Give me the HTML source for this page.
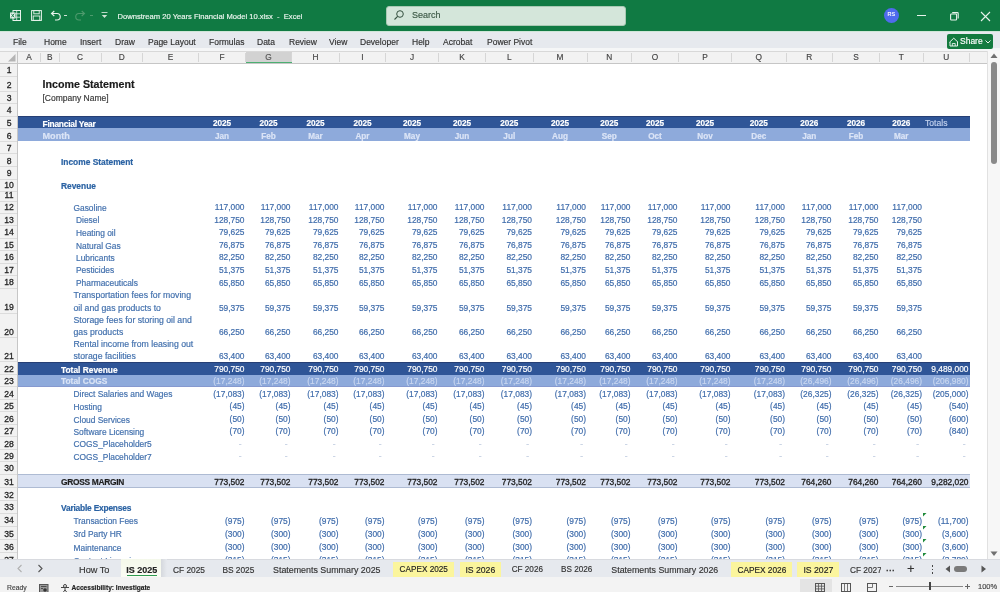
<!DOCTYPE html><html><head><meta charset="utf-8"><style>
*{margin:0;padding:0;box-sizing:border-box}
html,body{width:1000px;height:592px;overflow:hidden;background:#fff;font-family:"Liberation Sans", sans-serif}
.a{position:absolute;white-space:nowrap}
.t{position:absolute;white-space:nowrap;line-height:1;-webkit-text-stroke:0.15px}
</style></head><body><div style="position:absolute;left:0;top:0;width:1000px;height:592px;overflow:hidden;will-change:transform">

<div class="a" style="left:0;top:0;width:1000px;height:31px;background:#107a43"></div>
<div class="a" style="left:0;top:31px;width:1000px;height:1px;background:#cfe6d8"></div>
<div class="a" style="left:386px;top:5.5px;width:240px;height:20px;background:#d4e6da;border:1px solid #a9c9b4;border-radius:3px"></div>
<div class="t" style="left:412px;top:11px;font-size:9px;color:#3d5a47">Search</div>
<div class="t" style="left:117.5px;top:13px;font-size:7.6px;color:#eef7f1">Downstream 20 Years Financial Model 10.xlsx &nbsp;- &nbsp;Excel</div>
<div class="a" style="left:0;top:32px;width:1000px;height:16px;background:#e6e9ee"></div>
<div class="a" style="left:0;top:48px;width:1000px;height:3px;background:#f5f6f7"></div>
<div class="t" style="left:13px;top:37.5px;font-size:8.5px;color:#303030">File</div>
<div class="t" style="left:44px;top:37.5px;font-size:8.5px;color:#303030">Home</div>
<div class="t" style="left:80px;top:37.5px;font-size:8.5px;color:#303030">Insert</div>
<div class="t" style="left:115px;top:37.5px;font-size:8.5px;color:#303030">Draw</div>
<div class="t" style="left:148px;top:37.5px;font-size:8.5px;color:#303030">Page Layout</div>
<div class="t" style="left:209px;top:37.5px;font-size:8.5px;color:#303030">Formulas</div>
<div class="t" style="left:257px;top:37.5px;font-size:8.5px;color:#303030">Data</div>
<div class="t" style="left:289px;top:37.5px;font-size:8.5px;color:#303030">Review</div>
<div class="t" style="left:329px;top:37.5px;font-size:8.5px;color:#303030">View</div>
<div class="t" style="left:360px;top:37.5px;font-size:8.5px;color:#303030">Developer</div>
<div class="t" style="left:412px;top:37.5px;font-size:8.5px;color:#303030">Help</div>
<div class="t" style="left:443px;top:37.5px;font-size:8.5px;color:#303030">Acrobat</div>
<div class="t" style="left:487px;top:37.5px;font-size:8.5px;color:#303030">Power Pivot</div>
<div class="a" style="left:946.5px;top:33.5px;width:46px;height:15px;background:#137a3f;border-radius:2px"></div>
<div class="t" style="left:960px;top:37px;font-size:8.5px;color:#fff">Share</div>
<div class="a" style="left:0;top:51px;width:987px;height:12.5px;background:#f2f2f2;border-top:1px solid #d8d8d8"></div>
<div class="a" style="left:0;top:63px;width:987px;height:1px;background:#c6c6c6"></div>
<div class="a" style="left:40.0px;top:53px;width:1px;height:9px;background:#d6d6d6"></div>
<div class="t" style="left:17.5px;width:23.0px;text-align:center;top:53.4px;font-size:8.3px;color:#444">A</div>
<div class="a" style="left:58.5px;top:53px;width:1px;height:9px;background:#d6d6d6"></div>
<div class="t" style="left:40.5px;width:18.5px;text-align:center;top:53.4px;font-size:8.3px;color:#444">B</div>
<div class="a" style="left:100.5px;top:53px;width:1px;height:9px;background:#d6d6d6"></div>
<div class="t" style="left:59px;width:42px;text-align:center;top:53.4px;font-size:8.3px;color:#444">C</div>
<div class="a" style="left:142.0px;top:53px;width:1px;height:9px;background:#d6d6d6"></div>
<div class="t" style="left:101px;width:41.5px;text-align:center;top:53.4px;font-size:8.3px;color:#444">D</div>
<div class="a" style="left:198.0px;top:53px;width:1px;height:9px;background:#d6d6d6"></div>
<div class="t" style="left:142.5px;width:56.0px;text-align:center;top:53.4px;font-size:8.3px;color:#444">E</div>
<div class="a" style="left:245.0px;top:53px;width:1px;height:9px;background:#d6d6d6"></div>
<div class="t" style="left:198.5px;width:47.0px;text-align:center;top:53.4px;font-size:8.3px;color:#444">F</div>
<div class="a" style="left:245.5px;top:51.5px;width:46.0px;height:11.5px;background:#d2d2d2"></div>
<div class="a" style="left:245.5px;top:61.5px;width:46.0px;height:1.5px;background:#4caf72"></div>
<div class="a" style="left:291.0px;top:53px;width:1px;height:9px;background:#d6d6d6"></div>
<div class="t" style="left:245.5px;width:46.0px;text-align:center;top:53.4px;font-size:8.3px;color:#555">G</div>
<div class="a" style="left:339.0px;top:53px;width:1px;height:9px;background:#d6d6d6"></div>
<div class="t" style="left:291.5px;width:48.0px;text-align:center;top:53.4px;font-size:8.3px;color:#444">H</div>
<div class="a" style="left:385.0px;top:53px;width:1px;height:9px;background:#d6d6d6"></div>
<div class="t" style="left:339.5px;width:46.0px;text-align:center;top:53.4px;font-size:8.3px;color:#444">I</div>
<div class="a" style="left:438.0px;top:53px;width:1px;height:9px;background:#d6d6d6"></div>
<div class="t" style="left:385.5px;width:53.0px;text-align:center;top:53.4px;font-size:8.3px;color:#444">J</div>
<div class="a" style="left:485.0px;top:53px;width:1px;height:9px;background:#d6d6d6"></div>
<div class="t" style="left:438.5px;width:47.0px;text-align:center;top:53.4px;font-size:8.3px;color:#444">K</div>
<div class="a" style="left:532.5px;top:53px;width:1px;height:9px;background:#d6d6d6"></div>
<div class="t" style="left:485.5px;width:47.5px;text-align:center;top:53.4px;font-size:8.3px;color:#444">L</div>
<div class="a" style="left:586.5px;top:53px;width:1px;height:9px;background:#d6d6d6"></div>
<div class="t" style="left:533px;width:54px;text-align:center;top:53.4px;font-size:8.3px;color:#444">M</div>
<div class="a" style="left:631.0px;top:53px;width:1px;height:9px;background:#d6d6d6"></div>
<div class="t" style="left:587px;width:44.5px;text-align:center;top:53.4px;font-size:8.3px;color:#444">N</div>
<div class="a" style="left:678.0px;top:53px;width:1px;height:9px;background:#d6d6d6"></div>
<div class="t" style="left:631.5px;width:47.0px;text-align:center;top:53.4px;font-size:8.3px;color:#444">O</div>
<div class="a" style="left:731.0px;top:53px;width:1px;height:9px;background:#d6d6d6"></div>
<div class="t" style="left:678.5px;width:53.0px;text-align:center;top:53.4px;font-size:8.3px;color:#444">P</div>
<div class="a" style="left:785.5px;top:53px;width:1px;height:9px;background:#d6d6d6"></div>
<div class="t" style="left:731.5px;width:54.5px;text-align:center;top:53.4px;font-size:8.3px;color:#444">Q</div>
<div class="a" style="left:832.0px;top:53px;width:1px;height:9px;background:#d6d6d6"></div>
<div class="t" style="left:786px;width:46.5px;text-align:center;top:53.4px;font-size:8.3px;color:#444">R</div>
<div class="a" style="left:879.0px;top:53px;width:1px;height:9px;background:#d6d6d6"></div>
<div class="t" style="left:832.5px;width:47.0px;text-align:center;top:53.4px;font-size:8.3px;color:#444">S</div>
<div class="a" style="left:922.5px;top:53px;width:1px;height:9px;background:#d6d6d6"></div>
<div class="t" style="left:879.5px;width:43.5px;text-align:center;top:53.4px;font-size:8.3px;color:#444">T</div>
<div class="a" style="left:969.0px;top:53px;width:1px;height:9px;background:#d6d6d6"></div>
<div class="t" style="left:923px;width:46.5px;text-align:center;top:53.4px;font-size:8.3px;color:#444">U</div>
<div class="a" style="left:986.5px;top:53px;width:1px;height:9px;background:#d6d6d6"></div>
<svg class="a" style="left:8px;top:54px" width="8" height="8"><polygon points="7.5,0 7.5,7.5 0,7.5" fill="#b4b4b4"/></svg>
<div class="a" style="left:0;top:63.5px;width:17.5px;height:495.9px;background:#f2f2f2"></div>
<div class="a" style="left:17px;top:51px;width:1px;height:508.4px;background:#c6c6c6"></div>
<div class="a" style="left:0;top:75.5px;width:17px;height:1px;background:#dcdcdc"></div>
<div class="t" style="left:0.8px;width:16.5px;text-align:center;top:66.1px;font-size:8.6px;color:#262626;-webkit-text-stroke:0.3px #262626">1</div>
<div class="a" style="left:0;top:90.5px;width:17px;height:1px;background:#dcdcdc"></div>
<div class="t" style="left:0.8px;width:16.5px;text-align:center;top:81.1px;font-size:8.6px;color:#262626;-webkit-text-stroke:0.3px #262626">2</div>
<div class="a" style="left:0;top:103.25px;width:17px;height:1px;background:#dcdcdc"></div>
<div class="t" style="left:0.8px;width:16.5px;text-align:center;top:93.85px;font-size:8.6px;color:#262626;-webkit-text-stroke:0.3px #262626">3</div>
<div class="a" style="left:0;top:115.5px;width:17px;height:1px;background:#dcdcdc"></div>
<div class="t" style="left:0.8px;width:16.5px;text-align:center;top:106.1px;font-size:8.6px;color:#262626;-webkit-text-stroke:0.3px #262626">4</div>
<div class="a" style="left:0;top:127.9px;width:17px;height:1px;background:#dcdcdc"></div>
<div class="t" style="left:0.8px;width:16.5px;text-align:center;top:118.5px;font-size:8.6px;color:#262626;-webkit-text-stroke:0.3px #262626">5</div>
<div class="a" style="left:0;top:140.9px;width:17px;height:1px;background:#dcdcdc"></div>
<div class="t" style="left:0.8px;width:16.5px;text-align:center;top:131.5px;font-size:8.6px;color:#262626;-webkit-text-stroke:0.3px #262626">6</div>
<div class="a" style="left:0;top:153.25px;width:17px;height:1px;background:#dcdcdc"></div>
<div class="t" style="left:0.8px;width:16.5px;text-align:center;top:143.85px;font-size:8.6px;color:#262626;-webkit-text-stroke:0.3px #262626">7</div>
<div class="a" style="left:0;top:166.0px;width:17px;height:1px;background:#dcdcdc"></div>
<div class="t" style="left:0.8px;width:16.5px;text-align:center;top:156.6px;font-size:8.6px;color:#262626;-webkit-text-stroke:0.3px #262626">8</div>
<div class="a" style="left:0;top:178.5px;width:17px;height:1px;background:#dcdcdc"></div>
<div class="t" style="left:0.8px;width:16.5px;text-align:center;top:169.1px;font-size:8.6px;color:#262626;-webkit-text-stroke:0.3px #262626">9</div>
<div class="a" style="left:0;top:190.5px;width:17px;height:1px;background:#dcdcdc"></div>
<div class="t" style="left:0.8px;width:16.5px;text-align:center;top:181.1px;font-size:8.6px;color:#262626;-webkit-text-stroke:0.3px #262626">10</div>
<div class="a" style="left:0;top:200.5px;width:17px;height:1px;background:#dcdcdc"></div>
<div class="t" style="left:0.8px;width:16.5px;text-align:center;top:191.1px;font-size:8.6px;color:#262626;-webkit-text-stroke:0.3px #262626">11</div>
<div class="a" style="left:0;top:212.5px;width:17px;height:1px;background:#dcdcdc"></div>
<div class="t" style="left:0.8px;width:16.5px;text-align:center;top:203.1px;font-size:8.6px;color:#262626;-webkit-text-stroke:0.3px #262626">12</div>
<div class="a" style="left:0;top:225.0px;width:17px;height:1px;background:#dcdcdc"></div>
<div class="t" style="left:0.8px;width:16.5px;text-align:center;top:215.6px;font-size:8.6px;color:#262626;-webkit-text-stroke:0.3px #262626">13</div>
<div class="a" style="left:0;top:237.5px;width:17px;height:1px;background:#dcdcdc"></div>
<div class="t" style="left:0.8px;width:16.5px;text-align:center;top:228.1px;font-size:8.6px;color:#262626;-webkit-text-stroke:0.3px #262626">14</div>
<div class="a" style="left:0;top:250.2px;width:17px;height:1px;background:#dcdcdc"></div>
<div class="t" style="left:0.8px;width:16.5px;text-align:center;top:240.79999999999998px;font-size:8.6px;color:#262626;-webkit-text-stroke:0.3px #262626">15</div>
<div class="a" style="left:0;top:262.5px;width:17px;height:1px;background:#dcdcdc"></div>
<div class="t" style="left:0.8px;width:16.5px;text-align:center;top:253.1px;font-size:8.6px;color:#262626;-webkit-text-stroke:0.3px #262626">16</div>
<div class="a" style="left:0;top:275.0px;width:17px;height:1px;background:#dcdcdc"></div>
<div class="t" style="left:0.8px;width:16.5px;text-align:center;top:265.6px;font-size:8.6px;color:#262626;-webkit-text-stroke:0.3px #262626">17</div>
<div class="a" style="left:0;top:287.8px;width:17px;height:1px;background:#dcdcdc"></div>
<div class="t" style="left:0.8px;width:16.5px;text-align:center;top:278.40000000000003px;font-size:8.6px;color:#262626;-webkit-text-stroke:0.3px #262626">18</div>
<div class="a" style="left:0;top:312.8px;width:17px;height:1px;background:#dcdcdc"></div>
<div class="t" style="left:0.8px;width:16.5px;text-align:center;top:303.40000000000003px;font-size:8.6px;color:#262626;-webkit-text-stroke:0.3px #262626">19</div>
<div class="a" style="left:0;top:337.3px;width:17px;height:1px;background:#dcdcdc"></div>
<div class="t" style="left:0.8px;width:16.5px;text-align:center;top:327.90000000000003px;font-size:8.6px;color:#262626;-webkit-text-stroke:0.3px #262626">20</div>
<div class="a" style="left:0;top:361.3px;width:17px;height:1px;background:#dcdcdc"></div>
<div class="t" style="left:0.8px;width:16.5px;text-align:center;top:351.90000000000003px;font-size:8.6px;color:#262626;-webkit-text-stroke:0.3px #262626">21</div>
<div class="a" style="left:0;top:374.3px;width:17px;height:1px;background:#dcdcdc"></div>
<div class="t" style="left:0.8px;width:16.5px;text-align:center;top:364.90000000000003px;font-size:8.6px;color:#262626;-webkit-text-stroke:0.3px #262626">22</div>
<div class="a" style="left:0;top:386.3px;width:17px;height:1px;background:#dcdcdc"></div>
<div class="t" style="left:0.8px;width:16.5px;text-align:center;top:376.90000000000003px;font-size:8.6px;color:#262626;-webkit-text-stroke:0.3px #262626">23</div>
<div class="a" style="left:0;top:399.0px;width:17px;height:1px;background:#dcdcdc"></div>
<div class="t" style="left:0.8px;width:16.5px;text-align:center;top:389.6px;font-size:8.6px;color:#262626;-webkit-text-stroke:0.3px #262626">24</div>
<div class="a" style="left:0;top:411.4px;width:17px;height:1px;background:#dcdcdc"></div>
<div class="t" style="left:0.8px;width:16.5px;text-align:center;top:402.0px;font-size:8.6px;color:#262626;-webkit-text-stroke:0.3px #262626">25</div>
<div class="a" style="left:0;top:424.1px;width:17px;height:1px;background:#dcdcdc"></div>
<div class="t" style="left:0.8px;width:16.5px;text-align:center;top:414.70000000000005px;font-size:8.6px;color:#262626;-webkit-text-stroke:0.3px #262626">26</div>
<div class="a" style="left:0;top:436.4px;width:17px;height:1px;background:#dcdcdc"></div>
<div class="t" style="left:0.8px;width:16.5px;text-align:center;top:427.0px;font-size:8.6px;color:#262626;-webkit-text-stroke:0.3px #262626">27</div>
<div class="a" style="left:0;top:448.9px;width:17px;height:1px;background:#dcdcdc"></div>
<div class="t" style="left:0.8px;width:16.5px;text-align:center;top:439.5px;font-size:8.6px;color:#262626;-webkit-text-stroke:0.3px #262626">28</div>
<div class="a" style="left:0;top:461.4px;width:17px;height:1px;background:#dcdcdc"></div>
<div class="t" style="left:0.8px;width:16.5px;text-align:center;top:452.0px;font-size:8.6px;color:#262626;-webkit-text-stroke:0.3px #262626">29</div>
<div class="a" style="left:0;top:473.8px;width:17px;height:1px;background:#dcdcdc"></div>
<div class="t" style="left:0.8px;width:16.5px;text-align:center;top:464.40000000000003px;font-size:8.6px;color:#262626;-webkit-text-stroke:0.3px #262626">30</div>
<div class="a" style="left:0;top:487.1px;width:17px;height:1px;background:#dcdcdc"></div>
<div class="t" style="left:0.8px;width:16.5px;text-align:center;top:477.70000000000005px;font-size:8.6px;color:#262626;-webkit-text-stroke:0.3px #262626">31</div>
<div class="a" style="left:0;top:499.9px;width:17px;height:1px;background:#dcdcdc"></div>
<div class="t" style="left:0.8px;width:16.5px;text-align:center;top:490.5px;font-size:8.6px;color:#262626;-webkit-text-stroke:0.3px #262626">32</div>
<div class="a" style="left:0;top:512.8px;width:17px;height:1px;background:#dcdcdc"></div>
<div class="t" style="left:0.8px;width:16.5px;text-align:center;top:503.4px;font-size:8.6px;color:#262626;-webkit-text-stroke:0.3px #262626">33</div>
<div class="a" style="left:0;top:525.7px;width:17px;height:1px;background:#dcdcdc"></div>
<div class="t" style="left:0.8px;width:16.5px;text-align:center;top:516.3000000000001px;font-size:8.6px;color:#262626;-webkit-text-stroke:0.3px #262626">34</div>
<div class="a" style="left:0;top:538.9px;width:17px;height:1px;background:#dcdcdc"></div>
<div class="t" style="left:0.8px;width:16.5px;text-align:center;top:529.5px;font-size:8.6px;color:#262626;-webkit-text-stroke:0.3px #262626">35</div>
<div class="a" style="left:0;top:552.1px;width:17px;height:1px;background:#dcdcdc"></div>
<div class="t" style="left:0.8px;width:16.5px;text-align:center;top:542.7px;font-size:8.6px;color:#262626;-webkit-text-stroke:0.3px #262626">36</div>
<div class="a" style="left:0;top:565.3px;width:17px;height:1px;background:#dcdcdc"></div>
<div class="t" style="left:0.8px;width:16.5px;text-align:center;top:555.9px;font-size:8.6px;color:#262626;-webkit-text-stroke:0.3px #262626">37</div>
<div class="t" style="left:42.5px;top:78.9px;font-size:10.7px;font-weight:bold;color:#1b1b1b;-webkit-text-stroke:0.18px;">Income Statement</div>
<div class="t" style="left:42.5px;top:94.15px;font-size:8.5px;font-weight:normal;color:#3a3a3a;-webkit-text-stroke:0.18px;">[Company Name]</div>
<div class="a" style="left:17.5px;top:116px;width:952.0px;height:12.400000000000006px;background:#2f5597;"></div>
<div class="a" style="left:17.5px;top:116px;width:952px;height:1px;background:#263f75"></div>
<div class="a" style="left:17.5px;top:128.4px;width:952.0px;height:13.0px;background:#8eaadb;"></div>
<div class="t" style="left:42.5px;top:120.00000000000001px;font-size:8.4px;font-weight:bold;color:#ffffff;-webkit-text-stroke:0.18px;letter-spacing:-0.22px;">Financial Year</div>
<div class="t" style="left:42.5px;top:132.10000000000002px;font-size:9.1px;font-weight:bold;color:#dbe4f6;-webkit-text-stroke:0.18px;">Month</div>
<div class="t" style="left:198.5px;width:47.0px;text-align:center;top:120.30000000000001px;font-size:8.2px;font-weight:bold;color:#ffffff;-webkit-text-stroke:0.18px;">2025</div>
<div class="t" style="left:198.5px;width:47.0px;text-align:center;top:132.8px;font-size:8.2px;font-weight:bold;color:#dbe4f6;-webkit-text-stroke:0.18px;">Jan</div>
<div class="t" style="left:245.5px;width:46.0px;text-align:center;top:120.30000000000001px;font-size:8.2px;font-weight:bold;color:#ffffff;-webkit-text-stroke:0.18px;">2025</div>
<div class="t" style="left:245.5px;width:46.0px;text-align:center;top:132.8px;font-size:8.2px;font-weight:bold;color:#dbe4f6;-webkit-text-stroke:0.18px;">Feb</div>
<div class="t" style="left:291.5px;width:48.0px;text-align:center;top:120.30000000000001px;font-size:8.2px;font-weight:bold;color:#ffffff;-webkit-text-stroke:0.18px;">2025</div>
<div class="t" style="left:291.5px;width:48.0px;text-align:center;top:132.8px;font-size:8.2px;font-weight:bold;color:#dbe4f6;-webkit-text-stroke:0.18px;">Mar</div>
<div class="t" style="left:339.5px;width:46.0px;text-align:center;top:120.30000000000001px;font-size:8.2px;font-weight:bold;color:#ffffff;-webkit-text-stroke:0.18px;">2025</div>
<div class="t" style="left:339.5px;width:46.0px;text-align:center;top:132.8px;font-size:8.2px;font-weight:bold;color:#dbe4f6;-webkit-text-stroke:0.18px;">Apr</div>
<div class="t" style="left:385.5px;width:53.0px;text-align:center;top:120.30000000000001px;font-size:8.2px;font-weight:bold;color:#ffffff;-webkit-text-stroke:0.18px;">2025</div>
<div class="t" style="left:385.5px;width:53.0px;text-align:center;top:132.8px;font-size:8.2px;font-weight:bold;color:#dbe4f6;-webkit-text-stroke:0.18px;">May</div>
<div class="t" style="left:438.5px;width:47.0px;text-align:center;top:120.30000000000001px;font-size:8.2px;font-weight:bold;color:#ffffff;-webkit-text-stroke:0.18px;">2025</div>
<div class="t" style="left:438.5px;width:47.0px;text-align:center;top:132.8px;font-size:8.2px;font-weight:bold;color:#dbe4f6;-webkit-text-stroke:0.18px;">Jun</div>
<div class="t" style="left:485.5px;width:47.5px;text-align:center;top:120.30000000000001px;font-size:8.2px;font-weight:bold;color:#ffffff;-webkit-text-stroke:0.18px;">2025</div>
<div class="t" style="left:485.5px;width:47.5px;text-align:center;top:132.8px;font-size:8.2px;font-weight:bold;color:#dbe4f6;-webkit-text-stroke:0.18px;">Jul</div>
<div class="t" style="left:533px;width:54px;text-align:center;top:120.30000000000001px;font-size:8.2px;font-weight:bold;color:#ffffff;-webkit-text-stroke:0.18px;">2025</div>
<div class="t" style="left:533px;width:54px;text-align:center;top:132.8px;font-size:8.2px;font-weight:bold;color:#dbe4f6;-webkit-text-stroke:0.18px;">Aug</div>
<div class="t" style="left:587px;width:44.5px;text-align:center;top:120.30000000000001px;font-size:8.2px;font-weight:bold;color:#ffffff;-webkit-text-stroke:0.18px;">2025</div>
<div class="t" style="left:587px;width:44.5px;text-align:center;top:132.8px;font-size:8.2px;font-weight:bold;color:#dbe4f6;-webkit-text-stroke:0.18px;">Sep</div>
<div class="t" style="left:631.5px;width:47.0px;text-align:center;top:120.30000000000001px;font-size:8.2px;font-weight:bold;color:#ffffff;-webkit-text-stroke:0.18px;">2025</div>
<div class="t" style="left:631.5px;width:47.0px;text-align:center;top:132.8px;font-size:8.2px;font-weight:bold;color:#dbe4f6;-webkit-text-stroke:0.18px;">Oct</div>
<div class="t" style="left:678.5px;width:53.0px;text-align:center;top:120.30000000000001px;font-size:8.2px;font-weight:bold;color:#ffffff;-webkit-text-stroke:0.18px;">2025</div>
<div class="t" style="left:678.5px;width:53.0px;text-align:center;top:132.8px;font-size:8.2px;font-weight:bold;color:#dbe4f6;-webkit-text-stroke:0.18px;">Nov</div>
<div class="t" style="left:731.5px;width:54.5px;text-align:center;top:120.30000000000001px;font-size:8.2px;font-weight:bold;color:#ffffff;-webkit-text-stroke:0.18px;">2025</div>
<div class="t" style="left:731.5px;width:54.5px;text-align:center;top:132.8px;font-size:8.2px;font-weight:bold;color:#dbe4f6;-webkit-text-stroke:0.18px;">Dec</div>
<div class="t" style="left:786px;width:46.5px;text-align:center;top:120.30000000000001px;font-size:8.2px;font-weight:bold;color:#ffffff;-webkit-text-stroke:0.18px;">2026</div>
<div class="t" style="left:786px;width:46.5px;text-align:center;top:132.8px;font-size:8.2px;font-weight:bold;color:#dbe4f6;-webkit-text-stroke:0.18px;">Jan</div>
<div class="t" style="left:832.5px;width:47.0px;text-align:center;top:120.30000000000001px;font-size:8.2px;font-weight:bold;color:#ffffff;-webkit-text-stroke:0.18px;">2026</div>
<div class="t" style="left:832.5px;width:47.0px;text-align:center;top:132.8px;font-size:8.2px;font-weight:bold;color:#dbe4f6;-webkit-text-stroke:0.18px;">Feb</div>
<div class="t" style="left:879.5px;width:43.5px;text-align:center;top:120.30000000000001px;font-size:8.2px;font-weight:bold;color:#ffffff;-webkit-text-stroke:0.18px;">2026</div>
<div class="t" style="left:879.5px;width:43.5px;text-align:center;top:132.8px;font-size:8.2px;font-weight:bold;color:#dbe4f6;-webkit-text-stroke:0.18px;">Mar</div>
<div class="t" style="left:925px;top:118.80000000000001px;font-size:8.6px;font-weight:normal;color:#c2d1ee;-webkit-text-stroke:0.18px;">Totals</div>
<div class="t" style="left:61px;top:157.6px;font-size:8.4px;font-weight:bold;color:#2a62a3;-webkit-text-stroke:0.18px;">Income Statement</div>
<div class="t" style="left:61px;top:182.20000000000002px;font-size:8.4px;font-weight:bold;color:#2a62a3;-webkit-text-stroke:0.18px;">Revenue</div>
<div class="t" style="left:73.5px;top:203.9px;font-size:8.4px;font-weight:normal;color:#4270ad;-webkit-text-stroke:0.18px;">Gasoline</div>
<div class="t" style="right:755.5px;top:203.4px;font-size:8.4px;font-weight:normal;color:#3f6cab;-webkit-text-stroke:0.18px;">117,000</div>
<div class="t" style="right:709.5px;top:203.4px;font-size:8.4px;font-weight:normal;color:#3f6cab;-webkit-text-stroke:0.18px;">117,000</div>
<div class="t" style="right:661.5px;top:203.4px;font-size:8.4px;font-weight:normal;color:#3f6cab;-webkit-text-stroke:0.18px;">117,000</div>
<div class="t" style="right:615.5px;top:203.4px;font-size:8.4px;font-weight:normal;color:#3f6cab;-webkit-text-stroke:0.18px;">117,000</div>
<div class="t" style="right:562.5px;top:203.4px;font-size:8.4px;font-weight:normal;color:#3f6cab;-webkit-text-stroke:0.18px;">117,000</div>
<div class="t" style="right:515.5px;top:203.4px;font-size:8.4px;font-weight:normal;color:#3f6cab;-webkit-text-stroke:0.18px;">117,000</div>
<div class="t" style="right:468.0px;top:203.4px;font-size:8.4px;font-weight:normal;color:#3f6cab;-webkit-text-stroke:0.18px;">117,000</div>
<div class="t" style="right:414.0px;top:203.4px;font-size:8.4px;font-weight:normal;color:#3f6cab;-webkit-text-stroke:0.18px;">117,000</div>
<div class="t" style="right:369.5px;top:203.4px;font-size:8.4px;font-weight:normal;color:#3f6cab;-webkit-text-stroke:0.18px;">117,000</div>
<div class="t" style="right:322.5px;top:203.4px;font-size:8.4px;font-weight:normal;color:#3f6cab;-webkit-text-stroke:0.18px;">117,000</div>
<div class="t" style="right:269.5px;top:203.4px;font-size:8.4px;font-weight:normal;color:#3f6cab;-webkit-text-stroke:0.18px;">117,000</div>
<div class="t" style="right:215.0px;top:203.4px;font-size:8.4px;font-weight:normal;color:#3f6cab;-webkit-text-stroke:0.18px;">117,000</div>
<div class="t" style="right:168.5px;top:203.4px;font-size:8.4px;font-weight:normal;color:#3f6cab;-webkit-text-stroke:0.18px;">117,000</div>
<div class="t" style="right:121.5px;top:203.4px;font-size:8.4px;font-weight:normal;color:#3f6cab;-webkit-text-stroke:0.18px;">117,000</div>
<div class="t" style="right:78.0px;top:203.4px;font-size:8.4px;font-weight:normal;color:#3f6cab;-webkit-text-stroke:0.18px;">117,000</div>
<div class="t" style="left:76px;top:216.4px;font-size:8.4px;font-weight:normal;color:#4270ad;-webkit-text-stroke:0.18px;">Diesel</div>
<div class="t" style="right:755.5px;top:215.9px;font-size:8.4px;font-weight:normal;color:#3f6cab;-webkit-text-stroke:0.18px;">128,750</div>
<div class="t" style="right:709.5px;top:215.9px;font-size:8.4px;font-weight:normal;color:#3f6cab;-webkit-text-stroke:0.18px;">128,750</div>
<div class="t" style="right:661.5px;top:215.9px;font-size:8.4px;font-weight:normal;color:#3f6cab;-webkit-text-stroke:0.18px;">128,750</div>
<div class="t" style="right:615.5px;top:215.9px;font-size:8.4px;font-weight:normal;color:#3f6cab;-webkit-text-stroke:0.18px;">128,750</div>
<div class="t" style="right:562.5px;top:215.9px;font-size:8.4px;font-weight:normal;color:#3f6cab;-webkit-text-stroke:0.18px;">128,750</div>
<div class="t" style="right:515.5px;top:215.9px;font-size:8.4px;font-weight:normal;color:#3f6cab;-webkit-text-stroke:0.18px;">128,750</div>
<div class="t" style="right:468.0px;top:215.9px;font-size:8.4px;font-weight:normal;color:#3f6cab;-webkit-text-stroke:0.18px;">128,750</div>
<div class="t" style="right:414.0px;top:215.9px;font-size:8.4px;font-weight:normal;color:#3f6cab;-webkit-text-stroke:0.18px;">128,750</div>
<div class="t" style="right:369.5px;top:215.9px;font-size:8.4px;font-weight:normal;color:#3f6cab;-webkit-text-stroke:0.18px;">128,750</div>
<div class="t" style="right:322.5px;top:215.9px;font-size:8.4px;font-weight:normal;color:#3f6cab;-webkit-text-stroke:0.18px;">128,750</div>
<div class="t" style="right:269.5px;top:215.9px;font-size:8.4px;font-weight:normal;color:#3f6cab;-webkit-text-stroke:0.18px;">128,750</div>
<div class="t" style="right:215.0px;top:215.9px;font-size:8.4px;font-weight:normal;color:#3f6cab;-webkit-text-stroke:0.18px;">128,750</div>
<div class="t" style="right:168.5px;top:215.9px;font-size:8.4px;font-weight:normal;color:#3f6cab;-webkit-text-stroke:0.18px;">128,750</div>
<div class="t" style="right:121.5px;top:215.9px;font-size:8.4px;font-weight:normal;color:#3f6cab;-webkit-text-stroke:0.18px;">128,750</div>
<div class="t" style="right:78.0px;top:215.9px;font-size:8.4px;font-weight:normal;color:#3f6cab;-webkit-text-stroke:0.18px;">128,750</div>
<div class="t" style="left:76px;top:228.9px;font-size:8.4px;font-weight:normal;color:#4270ad;-webkit-text-stroke:0.18px;">Heating oil</div>
<div class="t" style="right:755.5px;top:228.4px;font-size:8.4px;font-weight:normal;color:#3f6cab;-webkit-text-stroke:0.18px;">79,625</div>
<div class="t" style="right:709.5px;top:228.4px;font-size:8.4px;font-weight:normal;color:#3f6cab;-webkit-text-stroke:0.18px;">79,625</div>
<div class="t" style="right:661.5px;top:228.4px;font-size:8.4px;font-weight:normal;color:#3f6cab;-webkit-text-stroke:0.18px;">79,625</div>
<div class="t" style="right:615.5px;top:228.4px;font-size:8.4px;font-weight:normal;color:#3f6cab;-webkit-text-stroke:0.18px;">79,625</div>
<div class="t" style="right:562.5px;top:228.4px;font-size:8.4px;font-weight:normal;color:#3f6cab;-webkit-text-stroke:0.18px;">79,625</div>
<div class="t" style="right:515.5px;top:228.4px;font-size:8.4px;font-weight:normal;color:#3f6cab;-webkit-text-stroke:0.18px;">79,625</div>
<div class="t" style="right:468.0px;top:228.4px;font-size:8.4px;font-weight:normal;color:#3f6cab;-webkit-text-stroke:0.18px;">79,625</div>
<div class="t" style="right:414.0px;top:228.4px;font-size:8.4px;font-weight:normal;color:#3f6cab;-webkit-text-stroke:0.18px;">79,625</div>
<div class="t" style="right:369.5px;top:228.4px;font-size:8.4px;font-weight:normal;color:#3f6cab;-webkit-text-stroke:0.18px;">79,625</div>
<div class="t" style="right:322.5px;top:228.4px;font-size:8.4px;font-weight:normal;color:#3f6cab;-webkit-text-stroke:0.18px;">79,625</div>
<div class="t" style="right:269.5px;top:228.4px;font-size:8.4px;font-weight:normal;color:#3f6cab;-webkit-text-stroke:0.18px;">79,625</div>
<div class="t" style="right:215.0px;top:228.4px;font-size:8.4px;font-weight:normal;color:#3f6cab;-webkit-text-stroke:0.18px;">79,625</div>
<div class="t" style="right:168.5px;top:228.4px;font-size:8.4px;font-weight:normal;color:#3f6cab;-webkit-text-stroke:0.18px;">79,625</div>
<div class="t" style="right:121.5px;top:228.4px;font-size:8.4px;font-weight:normal;color:#3f6cab;-webkit-text-stroke:0.18px;">79,625</div>
<div class="t" style="right:78.0px;top:228.4px;font-size:8.4px;font-weight:normal;color:#3f6cab;-webkit-text-stroke:0.18px;">79,625</div>
<div class="t" style="left:76px;top:241.6px;font-size:8.4px;font-weight:normal;color:#4270ad;-webkit-text-stroke:0.18px;">Natural Gas</div>
<div class="t" style="right:755.5px;top:241.1px;font-size:8.4px;font-weight:normal;color:#3f6cab;-webkit-text-stroke:0.18px;">76,875</div>
<div class="t" style="right:709.5px;top:241.1px;font-size:8.4px;font-weight:normal;color:#3f6cab;-webkit-text-stroke:0.18px;">76,875</div>
<div class="t" style="right:661.5px;top:241.1px;font-size:8.4px;font-weight:normal;color:#3f6cab;-webkit-text-stroke:0.18px;">76,875</div>
<div class="t" style="right:615.5px;top:241.1px;font-size:8.4px;font-weight:normal;color:#3f6cab;-webkit-text-stroke:0.18px;">76,875</div>
<div class="t" style="right:562.5px;top:241.1px;font-size:8.4px;font-weight:normal;color:#3f6cab;-webkit-text-stroke:0.18px;">76,875</div>
<div class="t" style="right:515.5px;top:241.1px;font-size:8.4px;font-weight:normal;color:#3f6cab;-webkit-text-stroke:0.18px;">76,875</div>
<div class="t" style="right:468.0px;top:241.1px;font-size:8.4px;font-weight:normal;color:#3f6cab;-webkit-text-stroke:0.18px;">76,875</div>
<div class="t" style="right:414.0px;top:241.1px;font-size:8.4px;font-weight:normal;color:#3f6cab;-webkit-text-stroke:0.18px;">76,875</div>
<div class="t" style="right:369.5px;top:241.1px;font-size:8.4px;font-weight:normal;color:#3f6cab;-webkit-text-stroke:0.18px;">76,875</div>
<div class="t" style="right:322.5px;top:241.1px;font-size:8.4px;font-weight:normal;color:#3f6cab;-webkit-text-stroke:0.18px;">76,875</div>
<div class="t" style="right:269.5px;top:241.1px;font-size:8.4px;font-weight:normal;color:#3f6cab;-webkit-text-stroke:0.18px;">76,875</div>
<div class="t" style="right:215.0px;top:241.1px;font-size:8.4px;font-weight:normal;color:#3f6cab;-webkit-text-stroke:0.18px;">76,875</div>
<div class="t" style="right:168.5px;top:241.1px;font-size:8.4px;font-weight:normal;color:#3f6cab;-webkit-text-stroke:0.18px;">76,875</div>
<div class="t" style="right:121.5px;top:241.1px;font-size:8.4px;font-weight:normal;color:#3f6cab;-webkit-text-stroke:0.18px;">76,875</div>
<div class="t" style="right:78.0px;top:241.1px;font-size:8.4px;font-weight:normal;color:#3f6cab;-webkit-text-stroke:0.18px;">76,875</div>
<div class="t" style="left:76px;top:253.9px;font-size:8.4px;font-weight:normal;color:#4270ad;-webkit-text-stroke:0.18px;">Lubricants</div>
<div class="t" style="right:755.5px;top:253.4px;font-size:8.4px;font-weight:normal;color:#3f6cab;-webkit-text-stroke:0.18px;">82,250</div>
<div class="t" style="right:709.5px;top:253.4px;font-size:8.4px;font-weight:normal;color:#3f6cab;-webkit-text-stroke:0.18px;">82,250</div>
<div class="t" style="right:661.5px;top:253.4px;font-size:8.4px;font-weight:normal;color:#3f6cab;-webkit-text-stroke:0.18px;">82,250</div>
<div class="t" style="right:615.5px;top:253.4px;font-size:8.4px;font-weight:normal;color:#3f6cab;-webkit-text-stroke:0.18px;">82,250</div>
<div class="t" style="right:562.5px;top:253.4px;font-size:8.4px;font-weight:normal;color:#3f6cab;-webkit-text-stroke:0.18px;">82,250</div>
<div class="t" style="right:515.5px;top:253.4px;font-size:8.4px;font-weight:normal;color:#3f6cab;-webkit-text-stroke:0.18px;">82,250</div>
<div class="t" style="right:468.0px;top:253.4px;font-size:8.4px;font-weight:normal;color:#3f6cab;-webkit-text-stroke:0.18px;">82,250</div>
<div class="t" style="right:414.0px;top:253.4px;font-size:8.4px;font-weight:normal;color:#3f6cab;-webkit-text-stroke:0.18px;">82,250</div>
<div class="t" style="right:369.5px;top:253.4px;font-size:8.4px;font-weight:normal;color:#3f6cab;-webkit-text-stroke:0.18px;">82,250</div>
<div class="t" style="right:322.5px;top:253.4px;font-size:8.4px;font-weight:normal;color:#3f6cab;-webkit-text-stroke:0.18px;">82,250</div>
<div class="t" style="right:269.5px;top:253.4px;font-size:8.4px;font-weight:normal;color:#3f6cab;-webkit-text-stroke:0.18px;">82,250</div>
<div class="t" style="right:215.0px;top:253.4px;font-size:8.4px;font-weight:normal;color:#3f6cab;-webkit-text-stroke:0.18px;">82,250</div>
<div class="t" style="right:168.5px;top:253.4px;font-size:8.4px;font-weight:normal;color:#3f6cab;-webkit-text-stroke:0.18px;">82,250</div>
<div class="t" style="right:121.5px;top:253.4px;font-size:8.4px;font-weight:normal;color:#3f6cab;-webkit-text-stroke:0.18px;">82,250</div>
<div class="t" style="right:78.0px;top:253.4px;font-size:8.4px;font-weight:normal;color:#3f6cab;-webkit-text-stroke:0.18px;">82,250</div>
<div class="t" style="left:76px;top:266.4px;font-size:8.4px;font-weight:normal;color:#4270ad;-webkit-text-stroke:0.18px;">Pesticides</div>
<div class="t" style="right:755.5px;top:265.9px;font-size:8.4px;font-weight:normal;color:#3f6cab;-webkit-text-stroke:0.18px;">51,375</div>
<div class="t" style="right:709.5px;top:265.9px;font-size:8.4px;font-weight:normal;color:#3f6cab;-webkit-text-stroke:0.18px;">51,375</div>
<div class="t" style="right:661.5px;top:265.9px;font-size:8.4px;font-weight:normal;color:#3f6cab;-webkit-text-stroke:0.18px;">51,375</div>
<div class="t" style="right:615.5px;top:265.9px;font-size:8.4px;font-weight:normal;color:#3f6cab;-webkit-text-stroke:0.18px;">51,375</div>
<div class="t" style="right:562.5px;top:265.9px;font-size:8.4px;font-weight:normal;color:#3f6cab;-webkit-text-stroke:0.18px;">51,375</div>
<div class="t" style="right:515.5px;top:265.9px;font-size:8.4px;font-weight:normal;color:#3f6cab;-webkit-text-stroke:0.18px;">51,375</div>
<div class="t" style="right:468.0px;top:265.9px;font-size:8.4px;font-weight:normal;color:#3f6cab;-webkit-text-stroke:0.18px;">51,375</div>
<div class="t" style="right:414.0px;top:265.9px;font-size:8.4px;font-weight:normal;color:#3f6cab;-webkit-text-stroke:0.18px;">51,375</div>
<div class="t" style="right:369.5px;top:265.9px;font-size:8.4px;font-weight:normal;color:#3f6cab;-webkit-text-stroke:0.18px;">51,375</div>
<div class="t" style="right:322.5px;top:265.9px;font-size:8.4px;font-weight:normal;color:#3f6cab;-webkit-text-stroke:0.18px;">51,375</div>
<div class="t" style="right:269.5px;top:265.9px;font-size:8.4px;font-weight:normal;color:#3f6cab;-webkit-text-stroke:0.18px;">51,375</div>
<div class="t" style="right:215.0px;top:265.9px;font-size:8.4px;font-weight:normal;color:#3f6cab;-webkit-text-stroke:0.18px;">51,375</div>
<div class="t" style="right:168.5px;top:265.9px;font-size:8.4px;font-weight:normal;color:#3f6cab;-webkit-text-stroke:0.18px;">51,375</div>
<div class="t" style="right:121.5px;top:265.9px;font-size:8.4px;font-weight:normal;color:#3f6cab;-webkit-text-stroke:0.18px;">51,375</div>
<div class="t" style="right:78.0px;top:265.9px;font-size:8.4px;font-weight:normal;color:#3f6cab;-webkit-text-stroke:0.18px;">51,375</div>
<div class="t" style="left:76px;top:279.2px;font-size:8.4px;font-weight:normal;color:#4270ad;-webkit-text-stroke:0.18px;">Pharmaceuticals</div>
<div class="t" style="right:755.5px;top:278.7px;font-size:8.4px;font-weight:normal;color:#3f6cab;-webkit-text-stroke:0.18px;">65,850</div>
<div class="t" style="right:709.5px;top:278.7px;font-size:8.4px;font-weight:normal;color:#3f6cab;-webkit-text-stroke:0.18px;">65,850</div>
<div class="t" style="right:661.5px;top:278.7px;font-size:8.4px;font-weight:normal;color:#3f6cab;-webkit-text-stroke:0.18px;">65,850</div>
<div class="t" style="right:615.5px;top:278.7px;font-size:8.4px;font-weight:normal;color:#3f6cab;-webkit-text-stroke:0.18px;">65,850</div>
<div class="t" style="right:562.5px;top:278.7px;font-size:8.4px;font-weight:normal;color:#3f6cab;-webkit-text-stroke:0.18px;">65,850</div>
<div class="t" style="right:515.5px;top:278.7px;font-size:8.4px;font-weight:normal;color:#3f6cab;-webkit-text-stroke:0.18px;">65,850</div>
<div class="t" style="right:468.0px;top:278.7px;font-size:8.4px;font-weight:normal;color:#3f6cab;-webkit-text-stroke:0.18px;">65,850</div>
<div class="t" style="right:414.0px;top:278.7px;font-size:8.4px;font-weight:normal;color:#3f6cab;-webkit-text-stroke:0.18px;">65,850</div>
<div class="t" style="right:369.5px;top:278.7px;font-size:8.4px;font-weight:normal;color:#3f6cab;-webkit-text-stroke:0.18px;">65,850</div>
<div class="t" style="right:322.5px;top:278.7px;font-size:8.4px;font-weight:normal;color:#3f6cab;-webkit-text-stroke:0.18px;">65,850</div>
<div class="t" style="right:269.5px;top:278.7px;font-size:8.4px;font-weight:normal;color:#3f6cab;-webkit-text-stroke:0.18px;">65,850</div>
<div class="t" style="right:215.0px;top:278.7px;font-size:8.4px;font-weight:normal;color:#3f6cab;-webkit-text-stroke:0.18px;">65,850</div>
<div class="t" style="right:168.5px;top:278.7px;font-size:8.4px;font-weight:normal;color:#3f6cab;-webkit-text-stroke:0.18px;">65,850</div>
<div class="t" style="right:121.5px;top:278.7px;font-size:8.4px;font-weight:normal;color:#3f6cab;-webkit-text-stroke:0.18px;">65,850</div>
<div class="t" style="right:78.0px;top:278.7px;font-size:8.4px;font-weight:normal;color:#3f6cab;-webkit-text-stroke:0.18px;">65,850</div>
<div class="t" style="left:73.5px;top:291.4px;font-size:8.7px;font-weight:normal;color:#4270ad;-webkit-text-stroke:0.18px;">Transportation fees for moving</div>
<div class="t" style="left:73.5px;top:303.7px;font-size:8.7px;font-weight:normal;color:#4270ad;-webkit-text-stroke:0.18px;">oil and gas products to</div>
<div class="t" style="right:755.5px;top:303.7px;font-size:8.4px;font-weight:normal;color:#3f6cab;-webkit-text-stroke:0.18px;">59,375</div>
<div class="t" style="right:709.5px;top:303.7px;font-size:8.4px;font-weight:normal;color:#3f6cab;-webkit-text-stroke:0.18px;">59,375</div>
<div class="t" style="right:661.5px;top:303.7px;font-size:8.4px;font-weight:normal;color:#3f6cab;-webkit-text-stroke:0.18px;">59,375</div>
<div class="t" style="right:615.5px;top:303.7px;font-size:8.4px;font-weight:normal;color:#3f6cab;-webkit-text-stroke:0.18px;">59,375</div>
<div class="t" style="right:562.5px;top:303.7px;font-size:8.4px;font-weight:normal;color:#3f6cab;-webkit-text-stroke:0.18px;">59,375</div>
<div class="t" style="right:515.5px;top:303.7px;font-size:8.4px;font-weight:normal;color:#3f6cab;-webkit-text-stroke:0.18px;">59,375</div>
<div class="t" style="right:468.0px;top:303.7px;font-size:8.4px;font-weight:normal;color:#3f6cab;-webkit-text-stroke:0.18px;">59,375</div>
<div class="t" style="right:414.0px;top:303.7px;font-size:8.4px;font-weight:normal;color:#3f6cab;-webkit-text-stroke:0.18px;">59,375</div>
<div class="t" style="right:369.5px;top:303.7px;font-size:8.4px;font-weight:normal;color:#3f6cab;-webkit-text-stroke:0.18px;">59,375</div>
<div class="t" style="right:322.5px;top:303.7px;font-size:8.4px;font-weight:normal;color:#3f6cab;-webkit-text-stroke:0.18px;">59,375</div>
<div class="t" style="right:269.5px;top:303.7px;font-size:8.4px;font-weight:normal;color:#3f6cab;-webkit-text-stroke:0.18px;">59,375</div>
<div class="t" style="right:215.0px;top:303.7px;font-size:8.4px;font-weight:normal;color:#3f6cab;-webkit-text-stroke:0.18px;">59,375</div>
<div class="t" style="right:168.5px;top:303.7px;font-size:8.4px;font-weight:normal;color:#3f6cab;-webkit-text-stroke:0.18px;">59,375</div>
<div class="t" style="right:121.5px;top:303.7px;font-size:8.4px;font-weight:normal;color:#3f6cab;-webkit-text-stroke:0.18px;">59,375</div>
<div class="t" style="right:78.0px;top:303.7px;font-size:8.4px;font-weight:normal;color:#3f6cab;-webkit-text-stroke:0.18px;">59,375</div>
<div class="t" style="left:73.5px;top:315.9px;font-size:8.7px;font-weight:normal;color:#4270ad;-webkit-text-stroke:0.18px;">Storage fees for storing oil and</div>
<div class="t" style="left:73.5px;top:328.2px;font-size:8.7px;font-weight:normal;color:#4270ad;-webkit-text-stroke:0.18px;">gas products</div>
<div class="t" style="right:755.5px;top:328.2px;font-size:8.4px;font-weight:normal;color:#3f6cab;-webkit-text-stroke:0.18px;">66,250</div>
<div class="t" style="right:709.5px;top:328.2px;font-size:8.4px;font-weight:normal;color:#3f6cab;-webkit-text-stroke:0.18px;">66,250</div>
<div class="t" style="right:661.5px;top:328.2px;font-size:8.4px;font-weight:normal;color:#3f6cab;-webkit-text-stroke:0.18px;">66,250</div>
<div class="t" style="right:615.5px;top:328.2px;font-size:8.4px;font-weight:normal;color:#3f6cab;-webkit-text-stroke:0.18px;">66,250</div>
<div class="t" style="right:562.5px;top:328.2px;font-size:8.4px;font-weight:normal;color:#3f6cab;-webkit-text-stroke:0.18px;">66,250</div>
<div class="t" style="right:515.5px;top:328.2px;font-size:8.4px;font-weight:normal;color:#3f6cab;-webkit-text-stroke:0.18px;">66,250</div>
<div class="t" style="right:468.0px;top:328.2px;font-size:8.4px;font-weight:normal;color:#3f6cab;-webkit-text-stroke:0.18px;">66,250</div>
<div class="t" style="right:414.0px;top:328.2px;font-size:8.4px;font-weight:normal;color:#3f6cab;-webkit-text-stroke:0.18px;">66,250</div>
<div class="t" style="right:369.5px;top:328.2px;font-size:8.4px;font-weight:normal;color:#3f6cab;-webkit-text-stroke:0.18px;">66,250</div>
<div class="t" style="right:322.5px;top:328.2px;font-size:8.4px;font-weight:normal;color:#3f6cab;-webkit-text-stroke:0.18px;">66,250</div>
<div class="t" style="right:269.5px;top:328.2px;font-size:8.4px;font-weight:normal;color:#3f6cab;-webkit-text-stroke:0.18px;">66,250</div>
<div class="t" style="right:215.0px;top:328.2px;font-size:8.4px;font-weight:normal;color:#3f6cab;-webkit-text-stroke:0.18px;">66,250</div>
<div class="t" style="right:168.5px;top:328.2px;font-size:8.4px;font-weight:normal;color:#3f6cab;-webkit-text-stroke:0.18px;">66,250</div>
<div class="t" style="right:121.5px;top:328.2px;font-size:8.4px;font-weight:normal;color:#3f6cab;-webkit-text-stroke:0.18px;">66,250</div>
<div class="t" style="right:78.0px;top:328.2px;font-size:8.4px;font-weight:normal;color:#3f6cab;-webkit-text-stroke:0.18px;">66,250</div>
<div class="t" style="left:73.5px;top:339.9px;font-size:8.7px;font-weight:normal;color:#4270ad;-webkit-text-stroke:0.18px;">Rental income from leasing out</div>
<div class="t" style="left:73.5px;top:352.2px;font-size:8.7px;font-weight:normal;color:#4270ad;-webkit-text-stroke:0.18px;">storage facilities</div>
<div class="t" style="right:755.5px;top:352.2px;font-size:8.4px;font-weight:normal;color:#3f6cab;-webkit-text-stroke:0.18px;">63,400</div>
<div class="t" style="right:709.5px;top:352.2px;font-size:8.4px;font-weight:normal;color:#3f6cab;-webkit-text-stroke:0.18px;">63,400</div>
<div class="t" style="right:661.5px;top:352.2px;font-size:8.4px;font-weight:normal;color:#3f6cab;-webkit-text-stroke:0.18px;">63,400</div>
<div class="t" style="right:615.5px;top:352.2px;font-size:8.4px;font-weight:normal;color:#3f6cab;-webkit-text-stroke:0.18px;">63,400</div>
<div class="t" style="right:562.5px;top:352.2px;font-size:8.4px;font-weight:normal;color:#3f6cab;-webkit-text-stroke:0.18px;">63,400</div>
<div class="t" style="right:515.5px;top:352.2px;font-size:8.4px;font-weight:normal;color:#3f6cab;-webkit-text-stroke:0.18px;">63,400</div>
<div class="t" style="right:468.0px;top:352.2px;font-size:8.4px;font-weight:normal;color:#3f6cab;-webkit-text-stroke:0.18px;">63,400</div>
<div class="t" style="right:414.0px;top:352.2px;font-size:8.4px;font-weight:normal;color:#3f6cab;-webkit-text-stroke:0.18px;">63,400</div>
<div class="t" style="right:369.5px;top:352.2px;font-size:8.4px;font-weight:normal;color:#3f6cab;-webkit-text-stroke:0.18px;">63,400</div>
<div class="t" style="right:322.5px;top:352.2px;font-size:8.4px;font-weight:normal;color:#3f6cab;-webkit-text-stroke:0.18px;">63,400</div>
<div class="t" style="right:269.5px;top:352.2px;font-size:8.4px;font-weight:normal;color:#3f6cab;-webkit-text-stroke:0.18px;">63,400</div>
<div class="t" style="right:215.0px;top:352.2px;font-size:8.4px;font-weight:normal;color:#3f6cab;-webkit-text-stroke:0.18px;">63,400</div>
<div class="t" style="right:168.5px;top:352.2px;font-size:8.4px;font-weight:normal;color:#3f6cab;-webkit-text-stroke:0.18px;">63,400</div>
<div class="t" style="right:121.5px;top:352.2px;font-size:8.4px;font-weight:normal;color:#3f6cab;-webkit-text-stroke:0.18px;">63,400</div>
<div class="t" style="right:78.0px;top:352.2px;font-size:8.4px;font-weight:normal;color:#3f6cab;-webkit-text-stroke:0.18px;">63,400</div>
<div class="a" style="left:17.5px;top:361.8px;width:952.0px;height:13.0px;background:#2f5597;"></div>
<div class="a" style="left:17.5px;top:361.8px;width:952px;height:1px;background:#263f75"></div>
<div class="t" style="left:61px;top:365.7px;font-size:8.4px;font-weight:bold;color:#ffffff;-webkit-text-stroke:0.18px;">Total Revenue</div>
<div class="t" style="right:755.5px;top:365.2px;font-size:8.4px;font-weight:normal;color:#ffffff;-webkit-text-stroke:0.18px;">790,750</div>
<div class="t" style="right:709.5px;top:365.2px;font-size:8.4px;font-weight:normal;color:#ffffff;-webkit-text-stroke:0.18px;">790,750</div>
<div class="t" style="right:661.5px;top:365.2px;font-size:8.4px;font-weight:normal;color:#ffffff;-webkit-text-stroke:0.18px;">790,750</div>
<div class="t" style="right:615.5px;top:365.2px;font-size:8.4px;font-weight:normal;color:#ffffff;-webkit-text-stroke:0.18px;">790,750</div>
<div class="t" style="right:562.5px;top:365.2px;font-size:8.4px;font-weight:normal;color:#ffffff;-webkit-text-stroke:0.18px;">790,750</div>
<div class="t" style="right:515.5px;top:365.2px;font-size:8.4px;font-weight:normal;color:#ffffff;-webkit-text-stroke:0.18px;">790,750</div>
<div class="t" style="right:468.0px;top:365.2px;font-size:8.4px;font-weight:normal;color:#ffffff;-webkit-text-stroke:0.18px;">790,750</div>
<div class="t" style="right:414.0px;top:365.2px;font-size:8.4px;font-weight:normal;color:#ffffff;-webkit-text-stroke:0.18px;">790,750</div>
<div class="t" style="right:369.5px;top:365.2px;font-size:8.4px;font-weight:normal;color:#ffffff;-webkit-text-stroke:0.18px;">790,750</div>
<div class="t" style="right:322.5px;top:365.2px;font-size:8.4px;font-weight:normal;color:#ffffff;-webkit-text-stroke:0.18px;">790,750</div>
<div class="t" style="right:269.5px;top:365.2px;font-size:8.4px;font-weight:normal;color:#ffffff;-webkit-text-stroke:0.18px;">790,750</div>
<div class="t" style="right:215.0px;top:365.2px;font-size:8.4px;font-weight:normal;color:#ffffff;-webkit-text-stroke:0.18px;">790,750</div>
<div class="t" style="right:168.5px;top:365.2px;font-size:8.4px;font-weight:normal;color:#ffffff;-webkit-text-stroke:0.18px;">790,750</div>
<div class="t" style="right:121.5px;top:365.2px;font-size:8.4px;font-weight:normal;color:#ffffff;-webkit-text-stroke:0.18px;">790,750</div>
<div class="t" style="right:78.0px;top:365.2px;font-size:8.4px;font-weight:normal;color:#ffffff;-webkit-text-stroke:0.18px;">790,750</div>
<div class="t" style="right:31.5px;top:365.2px;font-size:8.4px;font-weight:normal;color:#ffffff;-webkit-text-stroke:0.18px;">9,489,000</div>
<div class="a" style="left:17.5px;top:374.8px;width:952.0px;height:12.0px;background:#8eaadb;"></div>
<div class="a" style="left:17.5px;top:385.8px;width:952px;height:1px;background:#8699cf"></div>
<div class="t" style="left:61px;top:377.2px;font-size:8.4px;font-weight:bold;color:#dae4f6;-webkit-text-stroke:0.18px;">Total COGS</div>
<div class="t" style="right:755.5px;top:377.2px;font-size:8.4px;font-weight:normal;color:#c9d7f0;-webkit-text-stroke:0.18px;">(17,248)</div>
<div class="t" style="right:709.5px;top:377.2px;font-size:8.4px;font-weight:normal;color:#c9d7f0;-webkit-text-stroke:0.18px;">(17,248)</div>
<div class="t" style="right:661.5px;top:377.2px;font-size:8.4px;font-weight:normal;color:#c9d7f0;-webkit-text-stroke:0.18px;">(17,248)</div>
<div class="t" style="right:615.5px;top:377.2px;font-size:8.4px;font-weight:normal;color:#c9d7f0;-webkit-text-stroke:0.18px;">(17,248)</div>
<div class="t" style="right:562.5px;top:377.2px;font-size:8.4px;font-weight:normal;color:#c9d7f0;-webkit-text-stroke:0.18px;">(17,248)</div>
<div class="t" style="right:515.5px;top:377.2px;font-size:8.4px;font-weight:normal;color:#c9d7f0;-webkit-text-stroke:0.18px;">(17,248)</div>
<div class="t" style="right:468.0px;top:377.2px;font-size:8.4px;font-weight:normal;color:#c9d7f0;-webkit-text-stroke:0.18px;">(17,248)</div>
<div class="t" style="right:414.0px;top:377.2px;font-size:8.4px;font-weight:normal;color:#c9d7f0;-webkit-text-stroke:0.18px;">(17,248)</div>
<div class="t" style="right:369.5px;top:377.2px;font-size:8.4px;font-weight:normal;color:#c9d7f0;-webkit-text-stroke:0.18px;">(17,248)</div>
<div class="t" style="right:322.5px;top:377.2px;font-size:8.4px;font-weight:normal;color:#c9d7f0;-webkit-text-stroke:0.18px;">(17,248)</div>
<div class="t" style="right:269.5px;top:377.2px;font-size:8.4px;font-weight:normal;color:#c9d7f0;-webkit-text-stroke:0.18px;">(17,248)</div>
<div class="t" style="right:215.0px;top:377.2px;font-size:8.4px;font-weight:normal;color:#c9d7f0;-webkit-text-stroke:0.18px;">(17,248)</div>
<div class="t" style="right:168.5px;top:377.2px;font-size:8.4px;font-weight:normal;color:#c9d7f0;-webkit-text-stroke:0.18px;">(26,496)</div>
<div class="t" style="right:121.5px;top:377.2px;font-size:8.4px;font-weight:normal;color:#c9d7f0;-webkit-text-stroke:0.18px;">(26,496)</div>
<div class="t" style="right:78.0px;top:377.2px;font-size:8.4px;font-weight:normal;color:#c9d7f0;-webkit-text-stroke:0.18px;">(26,496)</div>
<div class="t" style="right:31.5px;top:377.2px;font-size:8.4px;font-weight:normal;color:#c9d7f0;-webkit-text-stroke:0.18px;">(206,980)</div>
<div class="t" style="left:73.5px;top:390.4px;font-size:8.4px;font-weight:normal;color:#4270ad;-webkit-text-stroke:0.18px;">Direct Salaries and Wages</div>
<div class="t" style="right:755.5px;top:389.9px;font-size:8.4px;font-weight:normal;color:#3f6cab;-webkit-text-stroke:0.18px;">(17,083)</div>
<div class="t" style="right:709.5px;top:389.9px;font-size:8.4px;font-weight:normal;color:#3f6cab;-webkit-text-stroke:0.18px;">(17,083)</div>
<div class="t" style="right:661.5px;top:389.9px;font-size:8.4px;font-weight:normal;color:#3f6cab;-webkit-text-stroke:0.18px;">(17,083)</div>
<div class="t" style="right:615.5px;top:389.9px;font-size:8.4px;font-weight:normal;color:#3f6cab;-webkit-text-stroke:0.18px;">(17,083)</div>
<div class="t" style="right:562.5px;top:389.9px;font-size:8.4px;font-weight:normal;color:#3f6cab;-webkit-text-stroke:0.18px;">(17,083)</div>
<div class="t" style="right:515.5px;top:389.9px;font-size:8.4px;font-weight:normal;color:#3f6cab;-webkit-text-stroke:0.18px;">(17,083)</div>
<div class="t" style="right:468.0px;top:389.9px;font-size:8.4px;font-weight:normal;color:#3f6cab;-webkit-text-stroke:0.18px;">(17,083)</div>
<div class="t" style="right:414.0px;top:389.9px;font-size:8.4px;font-weight:normal;color:#3f6cab;-webkit-text-stroke:0.18px;">(17,083)</div>
<div class="t" style="right:369.5px;top:389.9px;font-size:8.4px;font-weight:normal;color:#3f6cab;-webkit-text-stroke:0.18px;">(17,083)</div>
<div class="t" style="right:322.5px;top:389.9px;font-size:8.4px;font-weight:normal;color:#3f6cab;-webkit-text-stroke:0.18px;">(17,083)</div>
<div class="t" style="right:269.5px;top:389.9px;font-size:8.4px;font-weight:normal;color:#3f6cab;-webkit-text-stroke:0.18px;">(17,083)</div>
<div class="t" style="right:215.0px;top:389.9px;font-size:8.4px;font-weight:normal;color:#3f6cab;-webkit-text-stroke:0.18px;">(17,083)</div>
<div class="t" style="right:168.5px;top:389.9px;font-size:8.4px;font-weight:normal;color:#3f6cab;-webkit-text-stroke:0.18px;">(26,325)</div>
<div class="t" style="right:121.5px;top:389.9px;font-size:8.4px;font-weight:normal;color:#3f6cab;-webkit-text-stroke:0.18px;">(26,325)</div>
<div class="t" style="right:78.0px;top:389.9px;font-size:8.4px;font-weight:normal;color:#3f6cab;-webkit-text-stroke:0.18px;">(26,325)</div>
<div class="t" style="right:31.5px;top:389.9px;font-size:8.4px;font-weight:normal;color:#3f6cab;-webkit-text-stroke:0.18px;">(205,000)</div>
<div class="t" style="left:73.5px;top:402.79999999999995px;font-size:8.4px;font-weight:normal;color:#4270ad;-webkit-text-stroke:0.18px;">Hosting</div>
<div class="t" style="right:755.5px;top:402.29999999999995px;font-size:8.4px;font-weight:normal;color:#3f6cab;-webkit-text-stroke:0.18px;">(45)</div>
<div class="t" style="right:709.5px;top:402.29999999999995px;font-size:8.4px;font-weight:normal;color:#3f6cab;-webkit-text-stroke:0.18px;">(45)</div>
<div class="t" style="right:661.5px;top:402.29999999999995px;font-size:8.4px;font-weight:normal;color:#3f6cab;-webkit-text-stroke:0.18px;">(45)</div>
<div class="t" style="right:615.5px;top:402.29999999999995px;font-size:8.4px;font-weight:normal;color:#3f6cab;-webkit-text-stroke:0.18px;">(45)</div>
<div class="t" style="right:562.5px;top:402.29999999999995px;font-size:8.4px;font-weight:normal;color:#3f6cab;-webkit-text-stroke:0.18px;">(45)</div>
<div class="t" style="right:515.5px;top:402.29999999999995px;font-size:8.4px;font-weight:normal;color:#3f6cab;-webkit-text-stroke:0.18px;">(45)</div>
<div class="t" style="right:468.0px;top:402.29999999999995px;font-size:8.4px;font-weight:normal;color:#3f6cab;-webkit-text-stroke:0.18px;">(45)</div>
<div class="t" style="right:414.0px;top:402.29999999999995px;font-size:8.4px;font-weight:normal;color:#3f6cab;-webkit-text-stroke:0.18px;">(45)</div>
<div class="t" style="right:369.5px;top:402.29999999999995px;font-size:8.4px;font-weight:normal;color:#3f6cab;-webkit-text-stroke:0.18px;">(45)</div>
<div class="t" style="right:322.5px;top:402.29999999999995px;font-size:8.4px;font-weight:normal;color:#3f6cab;-webkit-text-stroke:0.18px;">(45)</div>
<div class="t" style="right:269.5px;top:402.29999999999995px;font-size:8.4px;font-weight:normal;color:#3f6cab;-webkit-text-stroke:0.18px;">(45)</div>
<div class="t" style="right:215.0px;top:402.29999999999995px;font-size:8.4px;font-weight:normal;color:#3f6cab;-webkit-text-stroke:0.18px;">(45)</div>
<div class="t" style="right:168.5px;top:402.29999999999995px;font-size:8.4px;font-weight:normal;color:#3f6cab;-webkit-text-stroke:0.18px;">(45)</div>
<div class="t" style="right:121.5px;top:402.29999999999995px;font-size:8.4px;font-weight:normal;color:#3f6cab;-webkit-text-stroke:0.18px;">(45)</div>
<div class="t" style="right:78.0px;top:402.29999999999995px;font-size:8.4px;font-weight:normal;color:#3f6cab;-webkit-text-stroke:0.18px;">(45)</div>
<div class="t" style="right:31.5px;top:402.29999999999995px;font-size:8.4px;font-weight:normal;color:#3f6cab;-webkit-text-stroke:0.18px;">(540)</div>
<div class="t" style="left:73.5px;top:415.5px;font-size:8.4px;font-weight:normal;color:#4270ad;-webkit-text-stroke:0.18px;">Cloud Services</div>
<div class="t" style="right:755.5px;top:415.0px;font-size:8.4px;font-weight:normal;color:#3f6cab;-webkit-text-stroke:0.18px;">(50)</div>
<div class="t" style="right:709.5px;top:415.0px;font-size:8.4px;font-weight:normal;color:#3f6cab;-webkit-text-stroke:0.18px;">(50)</div>
<div class="t" style="right:661.5px;top:415.0px;font-size:8.4px;font-weight:normal;color:#3f6cab;-webkit-text-stroke:0.18px;">(50)</div>
<div class="t" style="right:615.5px;top:415.0px;font-size:8.4px;font-weight:normal;color:#3f6cab;-webkit-text-stroke:0.18px;">(50)</div>
<div class="t" style="right:562.5px;top:415.0px;font-size:8.4px;font-weight:normal;color:#3f6cab;-webkit-text-stroke:0.18px;">(50)</div>
<div class="t" style="right:515.5px;top:415.0px;font-size:8.4px;font-weight:normal;color:#3f6cab;-webkit-text-stroke:0.18px;">(50)</div>
<div class="t" style="right:468.0px;top:415.0px;font-size:8.4px;font-weight:normal;color:#3f6cab;-webkit-text-stroke:0.18px;">(50)</div>
<div class="t" style="right:414.0px;top:415.0px;font-size:8.4px;font-weight:normal;color:#3f6cab;-webkit-text-stroke:0.18px;">(50)</div>
<div class="t" style="right:369.5px;top:415.0px;font-size:8.4px;font-weight:normal;color:#3f6cab;-webkit-text-stroke:0.18px;">(50)</div>
<div class="t" style="right:322.5px;top:415.0px;font-size:8.4px;font-weight:normal;color:#3f6cab;-webkit-text-stroke:0.18px;">(50)</div>
<div class="t" style="right:269.5px;top:415.0px;font-size:8.4px;font-weight:normal;color:#3f6cab;-webkit-text-stroke:0.18px;">(50)</div>
<div class="t" style="right:215.0px;top:415.0px;font-size:8.4px;font-weight:normal;color:#3f6cab;-webkit-text-stroke:0.18px;">(50)</div>
<div class="t" style="right:168.5px;top:415.0px;font-size:8.4px;font-weight:normal;color:#3f6cab;-webkit-text-stroke:0.18px;">(50)</div>
<div class="t" style="right:121.5px;top:415.0px;font-size:8.4px;font-weight:normal;color:#3f6cab;-webkit-text-stroke:0.18px;">(50)</div>
<div class="t" style="right:78.0px;top:415.0px;font-size:8.4px;font-weight:normal;color:#3f6cab;-webkit-text-stroke:0.18px;">(50)</div>
<div class="t" style="right:31.5px;top:415.0px;font-size:8.4px;font-weight:normal;color:#3f6cab;-webkit-text-stroke:0.18px;">(600)</div>
<div class="t" style="left:73.5px;top:427.79999999999995px;font-size:8.4px;font-weight:normal;color:#4270ad;-webkit-text-stroke:0.18px;">Software Licensing</div>
<div class="t" style="right:755.5px;top:427.29999999999995px;font-size:8.4px;font-weight:normal;color:#3f6cab;-webkit-text-stroke:0.18px;">(70)</div>
<div class="t" style="right:709.5px;top:427.29999999999995px;font-size:8.4px;font-weight:normal;color:#3f6cab;-webkit-text-stroke:0.18px;">(70)</div>
<div class="t" style="right:661.5px;top:427.29999999999995px;font-size:8.4px;font-weight:normal;color:#3f6cab;-webkit-text-stroke:0.18px;">(70)</div>
<div class="t" style="right:615.5px;top:427.29999999999995px;font-size:8.4px;font-weight:normal;color:#3f6cab;-webkit-text-stroke:0.18px;">(70)</div>
<div class="t" style="right:562.5px;top:427.29999999999995px;font-size:8.4px;font-weight:normal;color:#3f6cab;-webkit-text-stroke:0.18px;">(70)</div>
<div class="t" style="right:515.5px;top:427.29999999999995px;font-size:8.4px;font-weight:normal;color:#3f6cab;-webkit-text-stroke:0.18px;">(70)</div>
<div class="t" style="right:468.0px;top:427.29999999999995px;font-size:8.4px;font-weight:normal;color:#3f6cab;-webkit-text-stroke:0.18px;">(70)</div>
<div class="t" style="right:414.0px;top:427.29999999999995px;font-size:8.4px;font-weight:normal;color:#3f6cab;-webkit-text-stroke:0.18px;">(70)</div>
<div class="t" style="right:369.5px;top:427.29999999999995px;font-size:8.4px;font-weight:normal;color:#3f6cab;-webkit-text-stroke:0.18px;">(70)</div>
<div class="t" style="right:322.5px;top:427.29999999999995px;font-size:8.4px;font-weight:normal;color:#3f6cab;-webkit-text-stroke:0.18px;">(70)</div>
<div class="t" style="right:269.5px;top:427.29999999999995px;font-size:8.4px;font-weight:normal;color:#3f6cab;-webkit-text-stroke:0.18px;">(70)</div>
<div class="t" style="right:215.0px;top:427.29999999999995px;font-size:8.4px;font-weight:normal;color:#3f6cab;-webkit-text-stroke:0.18px;">(70)</div>
<div class="t" style="right:168.5px;top:427.29999999999995px;font-size:8.4px;font-weight:normal;color:#3f6cab;-webkit-text-stroke:0.18px;">(70)</div>
<div class="t" style="right:121.5px;top:427.29999999999995px;font-size:8.4px;font-weight:normal;color:#3f6cab;-webkit-text-stroke:0.18px;">(70)</div>
<div class="t" style="right:78.0px;top:427.29999999999995px;font-size:8.4px;font-weight:normal;color:#3f6cab;-webkit-text-stroke:0.18px;">(70)</div>
<div class="t" style="right:31.5px;top:427.29999999999995px;font-size:8.4px;font-weight:normal;color:#3f6cab;-webkit-text-stroke:0.18px;">(840)</div>
<div class="t" style="left:73.5px;top:440.29999999999995px;font-size:8.4px;font-weight:normal;color:#4270ad;-webkit-text-stroke:0.18px;">COGS_Placeholder5</div>
<div class="t" style="right:758.5px;top:439.79999999999995px;font-size:8.4px;font-weight:normal;color:#c5d0e2;-webkit-text-stroke:0.18px;">-</div>
<div class="t" style="right:712.5px;top:439.79999999999995px;font-size:8.4px;font-weight:normal;color:#c5d0e2;-webkit-text-stroke:0.18px;">-</div>
<div class="t" style="right:664.5px;top:439.79999999999995px;font-size:8.4px;font-weight:normal;color:#c5d0e2;-webkit-text-stroke:0.18px;">-</div>
<div class="t" style="right:618.5px;top:439.79999999999995px;font-size:8.4px;font-weight:normal;color:#c5d0e2;-webkit-text-stroke:0.18px;">-</div>
<div class="t" style="right:565.5px;top:439.79999999999995px;font-size:8.4px;font-weight:normal;color:#c5d0e2;-webkit-text-stroke:0.18px;">-</div>
<div class="t" style="right:518.5px;top:439.79999999999995px;font-size:8.4px;font-weight:normal;color:#c5d0e2;-webkit-text-stroke:0.18px;">-</div>
<div class="t" style="right:471.0px;top:439.79999999999995px;font-size:8.4px;font-weight:normal;color:#c5d0e2;-webkit-text-stroke:0.18px;">-</div>
<div class="t" style="right:417.0px;top:439.79999999999995px;font-size:8.4px;font-weight:normal;color:#c5d0e2;-webkit-text-stroke:0.18px;">-</div>
<div class="t" style="right:372.5px;top:439.79999999999995px;font-size:8.4px;font-weight:normal;color:#c5d0e2;-webkit-text-stroke:0.18px;">-</div>
<div class="t" style="right:325.5px;top:439.79999999999995px;font-size:8.4px;font-weight:normal;color:#c5d0e2;-webkit-text-stroke:0.18px;">-</div>
<div class="t" style="right:272.5px;top:439.79999999999995px;font-size:8.4px;font-weight:normal;color:#c5d0e2;-webkit-text-stroke:0.18px;">-</div>
<div class="t" style="right:218.0px;top:439.79999999999995px;font-size:8.4px;font-weight:normal;color:#c5d0e2;-webkit-text-stroke:0.18px;">-</div>
<div class="t" style="right:171.5px;top:439.79999999999995px;font-size:8.4px;font-weight:normal;color:#c5d0e2;-webkit-text-stroke:0.18px;">-</div>
<div class="t" style="right:124.5px;top:439.79999999999995px;font-size:8.4px;font-weight:normal;color:#c5d0e2;-webkit-text-stroke:0.18px;">-</div>
<div class="t" style="right:81.0px;top:439.79999999999995px;font-size:8.4px;font-weight:normal;color:#c5d0e2;-webkit-text-stroke:0.18px;">-</div>
<div class="t" style="right:34.5px;top:439.79999999999995px;font-size:8.4px;font-weight:normal;color:#c5d0e2;-webkit-text-stroke:0.18px;">-</div>
<div class="t" style="left:73.5px;top:452.79999999999995px;font-size:8.4px;font-weight:normal;color:#4270ad;-webkit-text-stroke:0.18px;">COGS_Placeholder7</div>
<div class="t" style="right:758.5px;top:452.29999999999995px;font-size:8.4px;font-weight:normal;color:#c5d0e2;-webkit-text-stroke:0.18px;">-</div>
<div class="t" style="right:712.5px;top:452.29999999999995px;font-size:8.4px;font-weight:normal;color:#c5d0e2;-webkit-text-stroke:0.18px;">-</div>
<div class="t" style="right:664.5px;top:452.29999999999995px;font-size:8.4px;font-weight:normal;color:#c5d0e2;-webkit-text-stroke:0.18px;">-</div>
<div class="t" style="right:618.5px;top:452.29999999999995px;font-size:8.4px;font-weight:normal;color:#c5d0e2;-webkit-text-stroke:0.18px;">-</div>
<div class="t" style="right:565.5px;top:452.29999999999995px;font-size:8.4px;font-weight:normal;color:#c5d0e2;-webkit-text-stroke:0.18px;">-</div>
<div class="t" style="right:518.5px;top:452.29999999999995px;font-size:8.4px;font-weight:normal;color:#c5d0e2;-webkit-text-stroke:0.18px;">-</div>
<div class="t" style="right:471.0px;top:452.29999999999995px;font-size:8.4px;font-weight:normal;color:#c5d0e2;-webkit-text-stroke:0.18px;">-</div>
<div class="t" style="right:417.0px;top:452.29999999999995px;font-size:8.4px;font-weight:normal;color:#c5d0e2;-webkit-text-stroke:0.18px;">-</div>
<div class="t" style="right:372.5px;top:452.29999999999995px;font-size:8.4px;font-weight:normal;color:#c5d0e2;-webkit-text-stroke:0.18px;">-</div>
<div class="t" style="right:325.5px;top:452.29999999999995px;font-size:8.4px;font-weight:normal;color:#c5d0e2;-webkit-text-stroke:0.18px;">-</div>
<div class="t" style="right:272.5px;top:452.29999999999995px;font-size:8.4px;font-weight:normal;color:#c5d0e2;-webkit-text-stroke:0.18px;">-</div>
<div class="t" style="right:218.0px;top:452.29999999999995px;font-size:8.4px;font-weight:normal;color:#c5d0e2;-webkit-text-stroke:0.18px;">-</div>
<div class="t" style="right:171.5px;top:452.29999999999995px;font-size:8.4px;font-weight:normal;color:#c5d0e2;-webkit-text-stroke:0.18px;">-</div>
<div class="t" style="right:124.5px;top:452.29999999999995px;font-size:8.4px;font-weight:normal;color:#c5d0e2;-webkit-text-stroke:0.18px;">-</div>
<div class="t" style="right:81.0px;top:452.29999999999995px;font-size:8.4px;font-weight:normal;color:#c5d0e2;-webkit-text-stroke:0.18px;">-</div>
<div class="t" style="right:34.5px;top:452.29999999999995px;font-size:8.4px;font-weight:normal;color:#c5d0e2;-webkit-text-stroke:0.18px;">-</div>
<div class="a" style="left:17.5px;top:474.3px;width:952.0px;height:13.300000000000011px;background:#d9e1f2;"></div>
<div class="a" style="left:17.5px;top:474.3px;width:952px;height:1px;background:#aebbd3"></div>
<div class="a" style="left:17.5px;top:486.6px;width:952px;height:1px;background:#aebbd3"></div>
<div class="t" style="left:61px;top:478.0px;font-size:8.4px;font-weight:bold;color:#1e1e1e;-webkit-text-stroke:0.18px;letter-spacing:-0.3px;">GROSS MARGIN</div>
<div class="t" style="right:755.5px;top:478.0px;font-size:8.4px;font-weight:normal;color:#1e1e1e;-webkit-text-stroke:0.18px;-webkit-text-stroke:0.3px;">773,502</div>
<div class="t" style="right:709.5px;top:478.0px;font-size:8.4px;font-weight:normal;color:#1e1e1e;-webkit-text-stroke:0.18px;-webkit-text-stroke:0.3px;">773,502</div>
<div class="t" style="right:661.5px;top:478.0px;font-size:8.4px;font-weight:normal;color:#1e1e1e;-webkit-text-stroke:0.18px;-webkit-text-stroke:0.3px;">773,502</div>
<div class="t" style="right:615.5px;top:478.0px;font-size:8.4px;font-weight:normal;color:#1e1e1e;-webkit-text-stroke:0.18px;-webkit-text-stroke:0.3px;">773,502</div>
<div class="t" style="right:562.5px;top:478.0px;font-size:8.4px;font-weight:normal;color:#1e1e1e;-webkit-text-stroke:0.18px;-webkit-text-stroke:0.3px;">773,502</div>
<div class="t" style="right:515.5px;top:478.0px;font-size:8.4px;font-weight:normal;color:#1e1e1e;-webkit-text-stroke:0.18px;-webkit-text-stroke:0.3px;">773,502</div>
<div class="t" style="right:468.0px;top:478.0px;font-size:8.4px;font-weight:normal;color:#1e1e1e;-webkit-text-stroke:0.18px;-webkit-text-stroke:0.3px;">773,502</div>
<div class="t" style="right:414.0px;top:478.0px;font-size:8.4px;font-weight:normal;color:#1e1e1e;-webkit-text-stroke:0.18px;-webkit-text-stroke:0.3px;">773,502</div>
<div class="t" style="right:369.5px;top:478.0px;font-size:8.4px;font-weight:normal;color:#1e1e1e;-webkit-text-stroke:0.18px;-webkit-text-stroke:0.3px;">773,502</div>
<div class="t" style="right:322.5px;top:478.0px;font-size:8.4px;font-weight:normal;color:#1e1e1e;-webkit-text-stroke:0.18px;-webkit-text-stroke:0.3px;">773,502</div>
<div class="t" style="right:269.5px;top:478.0px;font-size:8.4px;font-weight:normal;color:#1e1e1e;-webkit-text-stroke:0.18px;-webkit-text-stroke:0.3px;">773,502</div>
<div class="t" style="right:215.0px;top:478.0px;font-size:8.4px;font-weight:normal;color:#1e1e1e;-webkit-text-stroke:0.18px;-webkit-text-stroke:0.3px;">773,502</div>
<div class="t" style="right:168.5px;top:478.0px;font-size:8.4px;font-weight:normal;color:#1e1e1e;-webkit-text-stroke:0.18px;-webkit-text-stroke:0.3px;">764,260</div>
<div class="t" style="right:121.5px;top:478.0px;font-size:8.4px;font-weight:normal;color:#1e1e1e;-webkit-text-stroke:0.18px;-webkit-text-stroke:0.3px;">764,260</div>
<div class="t" style="right:78.0px;top:478.0px;font-size:8.4px;font-weight:normal;color:#1e1e1e;-webkit-text-stroke:0.18px;-webkit-text-stroke:0.3px;">764,260</div>
<div class="t" style="right:31.5px;top:478.0px;font-size:8.4px;font-weight:normal;color:#1e1e1e;-webkit-text-stroke:0.18px;-webkit-text-stroke:0.3px;">9,282,020</div>
<div class="t" style="left:61px;top:503.69999999999993px;font-size:8.4px;font-weight:bold;color:#2a62a3;-webkit-text-stroke:0.18px;letter-spacing:-0.2px;">Variable Expenses</div>
<div class="t" style="left:73.5px;top:517.1px;font-size:8.4px;font-weight:normal;color:#4270ad;-webkit-text-stroke:0.18px;">Transaction Fees</div>
<div class="t" style="right:755.5px;top:516.6px;font-size:8.4px;font-weight:normal;color:#3f6cab;-webkit-text-stroke:0.18px;">(975)</div>
<div class="t" style="right:709.5px;top:516.6px;font-size:8.4px;font-weight:normal;color:#3f6cab;-webkit-text-stroke:0.18px;">(975)</div>
<div class="t" style="right:661.5px;top:516.6px;font-size:8.4px;font-weight:normal;color:#3f6cab;-webkit-text-stroke:0.18px;">(975)</div>
<div class="t" style="right:615.5px;top:516.6px;font-size:8.4px;font-weight:normal;color:#3f6cab;-webkit-text-stroke:0.18px;">(975)</div>
<div class="t" style="right:562.5px;top:516.6px;font-size:8.4px;font-weight:normal;color:#3f6cab;-webkit-text-stroke:0.18px;">(975)</div>
<div class="t" style="right:515.5px;top:516.6px;font-size:8.4px;font-weight:normal;color:#3f6cab;-webkit-text-stroke:0.18px;">(975)</div>
<div class="t" style="right:468.0px;top:516.6px;font-size:8.4px;font-weight:normal;color:#3f6cab;-webkit-text-stroke:0.18px;">(975)</div>
<div class="t" style="right:414.0px;top:516.6px;font-size:8.4px;font-weight:normal;color:#3f6cab;-webkit-text-stroke:0.18px;">(975)</div>
<div class="t" style="right:369.5px;top:516.6px;font-size:8.4px;font-weight:normal;color:#3f6cab;-webkit-text-stroke:0.18px;">(975)</div>
<div class="t" style="right:322.5px;top:516.6px;font-size:8.4px;font-weight:normal;color:#3f6cab;-webkit-text-stroke:0.18px;">(975)</div>
<div class="t" style="right:269.5px;top:516.6px;font-size:8.4px;font-weight:normal;color:#3f6cab;-webkit-text-stroke:0.18px;">(975)</div>
<div class="t" style="right:215.0px;top:516.6px;font-size:8.4px;font-weight:normal;color:#3f6cab;-webkit-text-stroke:0.18px;">(975)</div>
<div class="t" style="right:168.5px;top:516.6px;font-size:8.4px;font-weight:normal;color:#3f6cab;-webkit-text-stroke:0.18px;">(975)</div>
<div class="t" style="right:121.5px;top:516.6px;font-size:8.4px;font-weight:normal;color:#3f6cab;-webkit-text-stroke:0.18px;">(975)</div>
<div class="t" style="right:78.0px;top:516.6px;font-size:8.4px;font-weight:normal;color:#3f6cab;-webkit-text-stroke:0.18px;">(975)</div>
<div class="t" style="right:31.5px;top:516.6px;font-size:8.4px;font-weight:normal;color:#3f6cab;-webkit-text-stroke:0.18px;">(11,700)</div>
<svg class="a" style="left:922.5px;top:513.3px" width="4" height="4"><polygon points="0,0 3.5,0 0,3.5" fill="#1f8a3b"/></svg>
<div class="t" style="left:73.5px;top:530.3px;font-size:8.4px;font-weight:normal;color:#4270ad;-webkit-text-stroke:0.18px;">3rd Party HR</div>
<div class="t" style="right:755.5px;top:529.8px;font-size:8.4px;font-weight:normal;color:#3f6cab;-webkit-text-stroke:0.18px;">(300)</div>
<div class="t" style="right:709.5px;top:529.8px;font-size:8.4px;font-weight:normal;color:#3f6cab;-webkit-text-stroke:0.18px;">(300)</div>
<div class="t" style="right:661.5px;top:529.8px;font-size:8.4px;font-weight:normal;color:#3f6cab;-webkit-text-stroke:0.18px;">(300)</div>
<div class="t" style="right:615.5px;top:529.8px;font-size:8.4px;font-weight:normal;color:#3f6cab;-webkit-text-stroke:0.18px;">(300)</div>
<div class="t" style="right:562.5px;top:529.8px;font-size:8.4px;font-weight:normal;color:#3f6cab;-webkit-text-stroke:0.18px;">(300)</div>
<div class="t" style="right:515.5px;top:529.8px;font-size:8.4px;font-weight:normal;color:#3f6cab;-webkit-text-stroke:0.18px;">(300)</div>
<div class="t" style="right:468.0px;top:529.8px;font-size:8.4px;font-weight:normal;color:#3f6cab;-webkit-text-stroke:0.18px;">(300)</div>
<div class="t" style="right:414.0px;top:529.8px;font-size:8.4px;font-weight:normal;color:#3f6cab;-webkit-text-stroke:0.18px;">(300)</div>
<div class="t" style="right:369.5px;top:529.8px;font-size:8.4px;font-weight:normal;color:#3f6cab;-webkit-text-stroke:0.18px;">(300)</div>
<div class="t" style="right:322.5px;top:529.8px;font-size:8.4px;font-weight:normal;color:#3f6cab;-webkit-text-stroke:0.18px;">(300)</div>
<div class="t" style="right:269.5px;top:529.8px;font-size:8.4px;font-weight:normal;color:#3f6cab;-webkit-text-stroke:0.18px;">(300)</div>
<div class="t" style="right:215.0px;top:529.8px;font-size:8.4px;font-weight:normal;color:#3f6cab;-webkit-text-stroke:0.18px;">(300)</div>
<div class="t" style="right:168.5px;top:529.8px;font-size:8.4px;font-weight:normal;color:#3f6cab;-webkit-text-stroke:0.18px;">(300)</div>
<div class="t" style="right:121.5px;top:529.8px;font-size:8.4px;font-weight:normal;color:#3f6cab;-webkit-text-stroke:0.18px;">(300)</div>
<div class="t" style="right:78.0px;top:529.8px;font-size:8.4px;font-weight:normal;color:#3f6cab;-webkit-text-stroke:0.18px;">(300)</div>
<div class="t" style="right:31.5px;top:529.8px;font-size:8.4px;font-weight:normal;color:#3f6cab;-webkit-text-stroke:0.18px;">(3,600)</div>
<svg class="a" style="left:922.5px;top:526.2px" width="4" height="4"><polygon points="0,0 3.5,0 0,3.5" fill="#1f8a3b"/></svg>
<div class="t" style="left:73.5px;top:543.5px;font-size:8.4px;font-weight:normal;color:#4270ad;-webkit-text-stroke:0.18px;">Maintenance</div>
<div class="t" style="right:755.5px;top:543.0px;font-size:8.4px;font-weight:normal;color:#3f6cab;-webkit-text-stroke:0.18px;">(300)</div>
<div class="t" style="right:709.5px;top:543.0px;font-size:8.4px;font-weight:normal;color:#3f6cab;-webkit-text-stroke:0.18px;">(300)</div>
<div class="t" style="right:661.5px;top:543.0px;font-size:8.4px;font-weight:normal;color:#3f6cab;-webkit-text-stroke:0.18px;">(300)</div>
<div class="t" style="right:615.5px;top:543.0px;font-size:8.4px;font-weight:normal;color:#3f6cab;-webkit-text-stroke:0.18px;">(300)</div>
<div class="t" style="right:562.5px;top:543.0px;font-size:8.4px;font-weight:normal;color:#3f6cab;-webkit-text-stroke:0.18px;">(300)</div>
<div class="t" style="right:515.5px;top:543.0px;font-size:8.4px;font-weight:normal;color:#3f6cab;-webkit-text-stroke:0.18px;">(300)</div>
<div class="t" style="right:468.0px;top:543.0px;font-size:8.4px;font-weight:normal;color:#3f6cab;-webkit-text-stroke:0.18px;">(300)</div>
<div class="t" style="right:414.0px;top:543.0px;font-size:8.4px;font-weight:normal;color:#3f6cab;-webkit-text-stroke:0.18px;">(300)</div>
<div class="t" style="right:369.5px;top:543.0px;font-size:8.4px;font-weight:normal;color:#3f6cab;-webkit-text-stroke:0.18px;">(300)</div>
<div class="t" style="right:322.5px;top:543.0px;font-size:8.4px;font-weight:normal;color:#3f6cab;-webkit-text-stroke:0.18px;">(300)</div>
<div class="t" style="right:269.5px;top:543.0px;font-size:8.4px;font-weight:normal;color:#3f6cab;-webkit-text-stroke:0.18px;">(300)</div>
<div class="t" style="right:215.0px;top:543.0px;font-size:8.4px;font-weight:normal;color:#3f6cab;-webkit-text-stroke:0.18px;">(300)</div>
<div class="t" style="right:168.5px;top:543.0px;font-size:8.4px;font-weight:normal;color:#3f6cab;-webkit-text-stroke:0.18px;">(300)</div>
<div class="t" style="right:121.5px;top:543.0px;font-size:8.4px;font-weight:normal;color:#3f6cab;-webkit-text-stroke:0.18px;">(300)</div>
<div class="t" style="right:78.0px;top:543.0px;font-size:8.4px;font-weight:normal;color:#3f6cab;-webkit-text-stroke:0.18px;">(300)</div>
<div class="t" style="right:31.5px;top:543.0px;font-size:8.4px;font-weight:normal;color:#3f6cab;-webkit-text-stroke:0.18px;">(3,600)</div>
<svg class="a" style="left:922.5px;top:539.4px" width="4" height="4"><polygon points="0,0 3.5,0 0,3.5" fill="#1f8a3b"/></svg>
<div class="t" style="left:73.5px;top:556.6999999999999px;font-size:8.4px;font-weight:normal;color:#4270ad;-webkit-text-stroke:0.18px;">Content Licensing</div>
<div class="t" style="right:755.5px;top:556.1999999999999px;font-size:8.4px;font-weight:normal;color:#3f6cab;-webkit-text-stroke:0.18px;">(315)</div>
<div class="t" style="right:709.5px;top:556.1999999999999px;font-size:8.4px;font-weight:normal;color:#3f6cab;-webkit-text-stroke:0.18px;">(315)</div>
<div class="t" style="right:661.5px;top:556.1999999999999px;font-size:8.4px;font-weight:normal;color:#3f6cab;-webkit-text-stroke:0.18px;">(315)</div>
<div class="t" style="right:615.5px;top:556.1999999999999px;font-size:8.4px;font-weight:normal;color:#3f6cab;-webkit-text-stroke:0.18px;">(315)</div>
<div class="t" style="right:562.5px;top:556.1999999999999px;font-size:8.4px;font-weight:normal;color:#3f6cab;-webkit-text-stroke:0.18px;">(315)</div>
<div class="t" style="right:515.5px;top:556.1999999999999px;font-size:8.4px;font-weight:normal;color:#3f6cab;-webkit-text-stroke:0.18px;">(315)</div>
<div class="t" style="right:468.0px;top:556.1999999999999px;font-size:8.4px;font-weight:normal;color:#3f6cab;-webkit-text-stroke:0.18px;">(315)</div>
<div class="t" style="right:414.0px;top:556.1999999999999px;font-size:8.4px;font-weight:normal;color:#3f6cab;-webkit-text-stroke:0.18px;">(315)</div>
<div class="t" style="right:369.5px;top:556.1999999999999px;font-size:8.4px;font-weight:normal;color:#3f6cab;-webkit-text-stroke:0.18px;">(315)</div>
<div class="t" style="right:322.5px;top:556.1999999999999px;font-size:8.4px;font-weight:normal;color:#3f6cab;-webkit-text-stroke:0.18px;">(315)</div>
<div class="t" style="right:269.5px;top:556.1999999999999px;font-size:8.4px;font-weight:normal;color:#3f6cab;-webkit-text-stroke:0.18px;">(315)</div>
<div class="t" style="right:215.0px;top:556.1999999999999px;font-size:8.4px;font-weight:normal;color:#3f6cab;-webkit-text-stroke:0.18px;">(315)</div>
<div class="t" style="right:168.5px;top:556.1999999999999px;font-size:8.4px;font-weight:normal;color:#3f6cab;-webkit-text-stroke:0.18px;">(315)</div>
<div class="t" style="right:121.5px;top:556.1999999999999px;font-size:8.4px;font-weight:normal;color:#3f6cab;-webkit-text-stroke:0.18px;">(315)</div>
<div class="t" style="right:78.0px;top:556.1999999999999px;font-size:8.4px;font-weight:normal;color:#3f6cab;-webkit-text-stroke:0.18px;">(315)</div>
<div class="t" style="right:31.5px;top:556.1999999999999px;font-size:8.4px;font-weight:normal;color:#3f6cab;-webkit-text-stroke:0.18px;">(3,780)</div>
<svg class="a" style="left:922.5px;top:552.6px" width="4" height="4"><polygon points="0,0 3.5,0 0,3.5" fill="#1f8a3b"/></svg>
<div class="a" style="left:987px;top:51px;width:13px;height:508.4px;background:#f7f7f7;border-left:1px solid #e1e1e1"></div>
<div class="a" style="left:990.5px;top:62px;width:6px;height:102px;background:#8a8a8a;border-radius:3px"></div>
<svg class="a" style="left:989.5px;top:53px" width="8" height="6"><polygon points="4,0.5 7.5,5 0.5,5" fill="#707070"/></svg>
<svg class="a" style="left:989.5px;top:551px" width="8" height="6"><polygon points="0.5,0.5 7.5,0.5 4,5" fill="#707070"/></svg>
<div class="a" style="left:0;top:559.4px;width:1000px;height:18px;background:#e6e9ee;border-top:1px solid #d8dadf"></div>
<svg class="a" style="left:16px;top:564px" width="8" height="9"><polyline points="5.5,1 2,4.5 5.5,8" fill="none" stroke="#b0b0b0" stroke-width="1.1"/></svg>
<svg class="a" style="left:36px;top:564px" width="8" height="9"><polyline points="2.5,1 6,4.5 2.5,8" fill="none" stroke="#555" stroke-width="1.1"/></svg>
<div class="a" style="left:121px;top:559.4px;width:40px;height:18px;background:linear-gradient(#f4f8ea,#fbfcf5)"></div>
<div class="a" style="left:126.5px;top:574.5px;width:30.5px;height:1.2px;background:#2e9b50"></div>
<div class="a" style="left:161px;top:559.4px;width:6px;height:18px;background:linear-gradient(90deg,#d5d8dd,#e6e9ee)"></div>
<div class="a" style="left:392.6px;top:561.5px;width:61.099999999999966px;height:16px;background:#fbf59d"></div>
<div class="a" style="left:460px;top:561.5px;width:40.5px;height:16px;background:#fbf59d"></div>
<div class="a" style="left:731px;top:561.5px;width:61.200000000000045px;height:16px;background:#fbf59d"></div>
<div class="a" style="left:797px;top:561.5px;width:42px;height:16px;background:#fbf59d"></div>
<div class="t" style="left:79px;top:566.3px;font-size:9.2px;font-weight:normal;color:#333">How To</div>
<div class="t" style="left:126.3px;top:566.3px;font-size:9.0px;font-weight:bold;color:#222">IS 2025</div>
<div class="t" style="left:173px;top:566.3px;font-size:8.35px;font-weight:normal;color:#333">CF 2025</div>
<div class="t" style="left:222.4px;top:566.3px;font-size:8.35px;font-weight:normal;color:#333">BS 2025</div>
<div class="t" style="left:273px;top:566.3px;font-size:8.9px;font-weight:normal;color:#333">Statements Summary 2025</div>
<div class="t" style="left:399.6px;top:566.3px;font-size:8.2px;font-weight:normal;color:#222">CAPEX 2025</div>
<div class="t" style="left:465.4px;top:566.3px;font-size:8.67px;font-weight:normal;color:#222">IS 2026</div>
<div class="t" style="left:511.7px;top:566.3px;font-size:8.16px;font-weight:normal;color:#333">CF 2026</div>
<div class="t" style="left:561px;top:566.3px;font-size:8.16px;font-weight:normal;color:#333">BS 2026</div>
<div class="t" style="left:611.3px;top:566.3px;font-size:8.84px;font-weight:normal;color:#333">Statements Summary 2026</div>
<div class="t" style="left:737.4px;top:566.3px;font-size:8.31px;font-weight:normal;color:#222">CAPEX 2026</div>
<div class="t" style="left:803.4px;top:566.3px;font-size:8.7px;font-weight:normal;color:#222">IS 2027</div>
<div class="t" style="left:850px;top:566.3px;font-size:8.3px;font-weight:normal;color:#333">CF 2027</div>
<div class="a" style="left:881px;top:560px;width:119px;height:17px;background:#e6e9ee"></div>
<div class="t" style="left:886px;top:566.5px;font-size:9px;color:#333;font-weight:bold">&middot;&middot;&middot;</div>
<div class="t" style="left:907px;top:562px;font-size:13px;color:#333">+</div>
<div class="a" style="left:931.5px;top:565px;width:1.5px;height:1.5px;background:#444"></div>
<div class="a" style="left:931.5px;top:568.5px;width:1.5px;height:1.5px;background:#444"></div>
<div class="a" style="left:931.5px;top:572px;width:1.5px;height:1.5px;background:#444"></div>
<svg class="a" style="left:945px;top:565px" width="6" height="8"><polygon points="5,0.5 5,7.5 0.5,4" fill="#555"/></svg>
<div class="a" style="left:953.5px;top:566px;width:13.5px;height:6px;background:#7a7a7a;border-radius:3px"></div>
<svg class="a" style="left:980.5px;top:565px" width="6" height="8"><polygon points="0.5,0.5 0.5,7.5 5,4" fill="#555"/></svg>
<div class="a" style="left:0;top:577.4px;width:1000px;height:2px;background:#f3f3f3"></div>
<div class="a" style="left:0;top:579.4px;width:1000px;height:12.6px;background:#f3f3f3"></div>
<div class="t" style="left:7px;top:584.5px;font-size:6.8px;color:#444">Ready</div>
<svg class="a" style="left:39px;top:583.5px" width="10" height="9"><rect x="0.5" y="0.5" width="8.5" height="8" fill="#9a9a9a" stroke="#555" stroke-width="1"/><path d="M2,2.5H7.5M2,4.5H4" stroke="#444" stroke-width="0.9"/><circle cx="6" cy="6" r="1.8" fill="#333"/></svg>
<svg class="a" style="left:59.5px;top:582.5px" width="10" height="10"><circle cx="5" cy="3" r="1.5" fill="none" stroke="#444" stroke-width="1"/><path d="M1,4.5 L9,4.5 M5,4.5 L5,7 L3,9.5 M5,7 L7,9.5" stroke="#444" stroke-width="1" fill="none"/></svg>
<div class="t" style="left:71.5px;top:585px;font-size:6.6px;color:#222;font-weight:bold">Accessibility: Investigate</div>
<div class="a" style="left:800px;top:579.4px;width:32px;height:12.6px;background:#e4e4e4"></div>
<svg class="a" style="left:815px;top:582.5px" width="10" height="9"><rect x="0.5" y="0.5" width="9" height="8" fill="none" stroke="#555"/><path d="M0.5,3.2H9.5M0.5,5.9H9.5M3.5,0.5V8.5M6.5,0.5V8.5" stroke="#555" stroke-width="0.8"/></svg>
<svg class="a" style="left:841px;top:582.5px" width="10" height="9"><rect x="0.5" y="0.5" width="9" height="8" fill="none" stroke="#555"/><path d="M3.5,0.5V8.5M6.5,0.5V8.5" stroke="#555" stroke-width="0.8"/></svg>
<svg class="a" style="left:867px;top:582.5px" width="10" height="9"><rect x="0.5" y="0.5" width="9" height="8" fill="none" stroke="#555"/><path d="M0.5,4.5H5.5V0.5" stroke="#555" stroke-width="0.8" fill="none"/></svg>
<div class="a" style="left:889px;top:585.5px;width:4px;height:1px;background:#666"></div>
<div class="a" style="left:896px;top:585.5px;width:67px;height:1px;background:#888"></div>
<div class="a" style="left:928.5px;top:582px;width:2.5px;height:8px;background:#444"></div>
<div class="a" style="left:965px;top:585.5px;width:5px;height:1px;background:#666"></div>
<div class="a" style="left:967px;top:583.5px;width:1px;height:5px;background:#666"></div>
<div class="t" style="left:978px;top:582.5px;font-size:7.5px;color:#444">100%</div>
<svg class="a" style="left:10px;top:10px" width="11" height="11"><rect x="3" y="0.5" width="7.5" height="10" fill="none" stroke="#e8f3ec" stroke-width="1"/><path d="M3,3.8H10.5M3,7.2H10.5M6.7,0.5V10.5" stroke="#e8f3ec" stroke-width="0.8"/><rect x="0" y="2.5" width="5.5" height="6" fill="#e8f3ec"/><path d="M1.3,3.7L4.2,7.3M4.2,3.7L1.3,7.3" stroke="#107a43" stroke-width="0.9"/></svg>
<svg class="a" style="left:31px;top:9.5px" width="11" height="11"><rect x="0.6" y="0.6" width="9.8" height="9.8" fill="none" stroke="#e8f3ec" stroke-width="1"/><rect x="2.8" y="0.6" width="5.4" height="3.2" fill="none" stroke="#e8f3ec" stroke-width="0.9"/><rect x="2.2" y="6" width="6.6" height="4.4" fill="none" stroke="#e8f3ec" stroke-width="0.9"/></svg>
<svg class="a" style="left:49.5px;top:9px" width="12" height="13"><path d="M2,4.5 H7 A3.2,3.2 0 0 1 7,11 H5" fill="none" stroke="#e8f3ec" stroke-width="1.1"/><polyline points="4.3,2 1.5,4.5 4.3,7" fill="none" stroke="#e8f3ec" stroke-width="1.1"/></svg>
<div class="a" style="left:64px;top:14.5px;width:3px;height:1px;background:#cfe3d6"></div>
<svg class="a" style="left:74px;top:9px" width="12" height="13"><path d="M10,4.5 H5 A3.2,3.2 0 0 0 5,11 H7" fill="none" stroke="#4e9a6d" stroke-width="1.1"/><polyline points="7.7,2 10.5,4.5 7.7,7" fill="none" stroke="#4e9a6d" stroke-width="1.1"/></svg>
<div class="a" style="left:90px;top:14.5px;width:3px;height:1px;background:#4e9a6d"></div>
<svg class="a" style="left:101px;top:11px" width="7" height="8"><path d="M0.5,1.5H6.5" stroke="#cfe3d6" stroke-width="0.9"/><polygon points="0.8,4 6.2,4 3.5,7" fill="#cfe3d6"/></svg>
<svg class="a" style="left:393px;top:9px" width="12" height="12"><circle cx="7" cy="5" r="3.3" fill="none" stroke="#35513f" stroke-width="1"/><path d="M4.6,7.4 L1.5,10.5" stroke="#35513f" stroke-width="1.1"/></svg>
<div class="a" style="left:883.5px;top:7.5px;width:15.5px;height:15.5px;border-radius:50%;background:#4f6bed"></div>
<div class="t" style="left:883.5px;width:15.5px;text-align:center;top:12px;font-size:5.5px;color:#fff">RS</div>
<div class="a" style="left:917px;top:15px;width:9px;height:1px;background:#e8f3ec"></div>
<svg class="a" style="left:949.5px;top:11.5px" width="9" height="9"><rect x="0.6" y="2" width="6" height="6" rx="0.8" fill="none" stroke="#e8f3ec" stroke-width="1.1"/><path d="M2.2,0.6H7.4A0.8,0.8 0 0 1 8.2,1.4V6.4" fill="none" stroke="#e8f3ec" stroke-width="1.1"/></svg>
<svg class="a" style="left:980px;top:10.5px" width="11" height="11"><path d="M1,1L10,10M10,1L1,10" stroke="#e8f3ec" stroke-width="1.1"/></svg>
<svg class="a" style="left:949px;top:36.5px" width="10" height="10"><path d="M1,5V9H8.5V5" fill="none" stroke="#fff" stroke-width="0.9"/><path d="M0.5,5.2L4.75,1.2L9,5.2" fill="none" stroke="#fff" stroke-width="0.9"/><path d="M3.3,9V6.5H6.2V9" fill="none" stroke="#fff" stroke-width="0.8"/></svg>
<svg class="a" style="left:985px;top:39.5px" width="6" height="4"><polyline points="0.5,0.5 3,3 5.5,0.5" fill="none" stroke="#fff" stroke-width="0.9"/></svg>
</div></body></html>
